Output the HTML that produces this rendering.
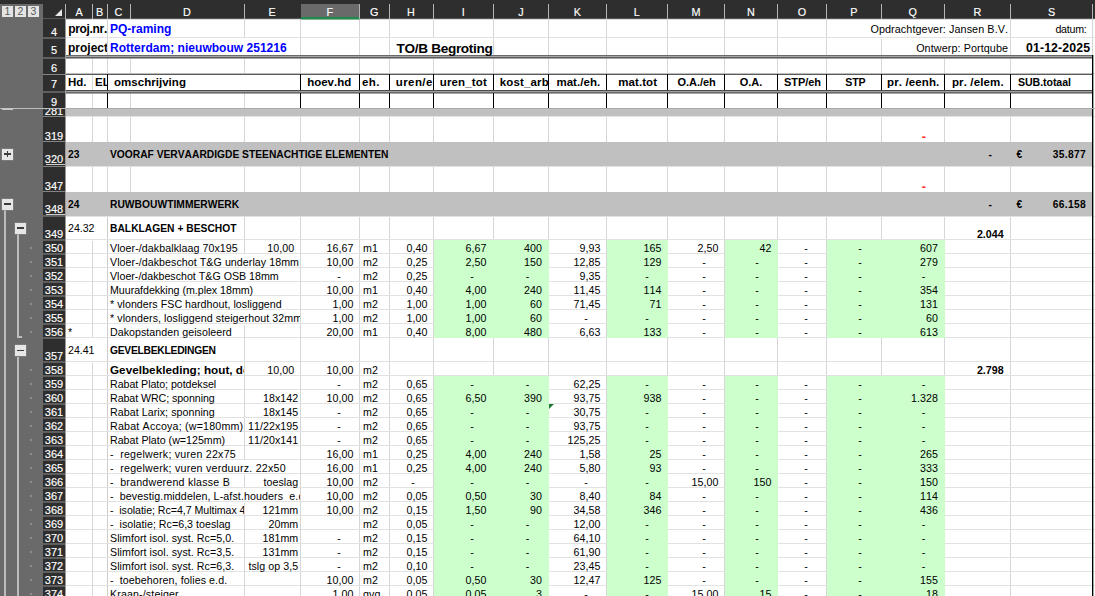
<!DOCTYPE html>
<html><head><meta charset="utf-8"><title>Begroting</title>
<style>
html,body{margin:0;padding:0;}
body{width:1095px;height:596px;overflow:hidden;background:#fff;position:relative;}
#s{position:absolute;left:0;top:0;width:1095px;height:596px;overflow:hidden;background:#fff;font-family:"Liberation Sans", sans-serif;font-size:10.67px;line-height:normal;font-kerning:none;white-space:pre;}
#s div,#s svg,#s span{position:absolute;}
</style></head><body><div id="s">
<div style="left:92px;top:18px;width:1px;height:21px;background:#d6d6d6;"></div>
<div style="left:107px;top:18px;width:1px;height:21px;background:#d6d6d6;"></div>
<div style="left:130px;top:18px;width:1px;height:21px;background:#d6d6d6;"></div>
<div style="left:244px;top:18px;width:1px;height:21px;background:#d6d6d6;"></div>
<div style="left:300px;top:18px;width:1px;height:21px;background:#d6d6d6;"></div>
<div style="left:359px;top:18px;width:1px;height:21px;background:#d6d6d6;"></div>
<div style="left:389px;top:18px;width:1px;height:21px;background:#d6d6d6;"></div>
<div style="left:433px;top:18px;width:1px;height:21px;background:#d6d6d6;"></div>
<div style="left:493px;top:18px;width:1px;height:21px;background:#d6d6d6;"></div>
<div style="left:548px;top:18px;width:1px;height:21px;background:#d6d6d6;"></div>
<div style="left:606px;top:18px;width:1px;height:21px;background:#d6d6d6;"></div>
<div style="left:667px;top:18px;width:1px;height:21px;background:#d6d6d6;"></div>
<div style="left:724px;top:18px;width:1px;height:21px;background:#d6d6d6;"></div>
<div style="left:777px;top:18px;width:1px;height:21px;background:#d6d6d6;"></div>
<div style="left:826px;top:18px;width:1px;height:21px;background:#d6d6d6;"></div>
<div style="left:881px;top:18px;width:1px;height:21px;background:#d6d6d6;"></div>
<div style="left:944px;top:18px;width:1px;height:21px;background:#d6d6d6;"></div>
<div style="left:1010px;top:18px;width:1px;height:21px;background:#d6d6d6;"></div>
<div style="left:1092px;top:18px;width:1px;height:21px;background:#d6d6d6;"></div>
<div style="left:92px;top:37px;width:1px;height:20px;background:#d6d6d6;"></div>
<div style="left:107px;top:37px;width:1px;height:20px;background:#d6d6d6;"></div>
<div style="left:130px;top:37px;width:1px;height:20px;background:#d6d6d6;"></div>
<div style="left:244px;top:37px;width:1px;height:20px;background:#d6d6d6;"></div>
<div style="left:300px;top:37px;width:1px;height:20px;background:#d6d6d6;"></div>
<div style="left:359px;top:37px;width:1px;height:20px;background:#d6d6d6;"></div>
<div style="left:389px;top:37px;width:1px;height:20px;background:#d6d6d6;"></div>
<div style="left:433px;top:37px;width:1px;height:20px;background:#d6d6d6;"></div>
<div style="left:493px;top:37px;width:1px;height:20px;background:#d6d6d6;"></div>
<div style="left:548px;top:37px;width:1px;height:20px;background:#d6d6d6;"></div>
<div style="left:606px;top:37px;width:1px;height:20px;background:#d6d6d6;"></div>
<div style="left:667px;top:37px;width:1px;height:20px;background:#d6d6d6;"></div>
<div style="left:724px;top:37px;width:1px;height:20px;background:#d6d6d6;"></div>
<div style="left:777px;top:37px;width:1px;height:20px;background:#d6d6d6;"></div>
<div style="left:826px;top:37px;width:1px;height:20px;background:#d6d6d6;"></div>
<div style="left:881px;top:37px;width:1px;height:20px;background:#d6d6d6;"></div>
<div style="left:944px;top:37px;width:1px;height:20px;background:#d6d6d6;"></div>
<div style="left:1010px;top:37px;width:1px;height:20px;background:#d6d6d6;"></div>
<div style="left:1092px;top:37px;width:1px;height:20px;background:#d6d6d6;"></div>
<div style="left:92px;top:58px;width:1px;height:17px;background:#d6d6d6;"></div>
<div style="left:107px;top:58px;width:1px;height:17px;background:#d6d6d6;"></div>
<div style="left:130px;top:58px;width:1px;height:17px;background:#d6d6d6;"></div>
<div style="left:244px;top:58px;width:1px;height:17px;background:#d6d6d6;"></div>
<div style="left:300px;top:58px;width:1px;height:17px;background:#d6d6d6;"></div>
<div style="left:359px;top:58px;width:1px;height:17px;background:#d6d6d6;"></div>
<div style="left:389px;top:58px;width:1px;height:17px;background:#d6d6d6;"></div>
<div style="left:433px;top:58px;width:1px;height:17px;background:#d6d6d6;"></div>
<div style="left:493px;top:58px;width:1px;height:17px;background:#d6d6d6;"></div>
<div style="left:548px;top:58px;width:1px;height:17px;background:#d6d6d6;"></div>
<div style="left:606px;top:58px;width:1px;height:17px;background:#d6d6d6;"></div>
<div style="left:667px;top:58px;width:1px;height:17px;background:#d6d6d6;"></div>
<div style="left:724px;top:58px;width:1px;height:17px;background:#d6d6d6;"></div>
<div style="left:777px;top:58px;width:1px;height:17px;background:#d6d6d6;"></div>
<div style="left:826px;top:58px;width:1px;height:17px;background:#d6d6d6;"></div>
<div style="left:881px;top:58px;width:1px;height:17px;background:#d6d6d6;"></div>
<div style="left:944px;top:58px;width:1px;height:17px;background:#d6d6d6;"></div>
<div style="left:1010px;top:58px;width:1px;height:17px;background:#d6d6d6;"></div>
<div style="left:1092px;top:58px;width:1px;height:17px;background:#d6d6d6;"></div>
<div style="left:92px;top:74px;width:1px;height:17px;background:#d6d6d6;"></div>
<div style="left:107px;top:74px;width:1px;height:17px;background:#d6d6d6;"></div>
<div style="left:130px;top:74px;width:1px;height:17px;background:#d6d6d6;"></div>
<div style="left:244px;top:74px;width:1px;height:17px;background:#d6d6d6;"></div>
<div style="left:300px;top:74px;width:1px;height:17px;background:#d6d6d6;"></div>
<div style="left:359px;top:74px;width:1px;height:17px;background:#d6d6d6;"></div>
<div style="left:389px;top:74px;width:1px;height:17px;background:#d6d6d6;"></div>
<div style="left:433px;top:74px;width:1px;height:17px;background:#d6d6d6;"></div>
<div style="left:493px;top:74px;width:1px;height:17px;background:#d6d6d6;"></div>
<div style="left:548px;top:74px;width:1px;height:17px;background:#d6d6d6;"></div>
<div style="left:606px;top:74px;width:1px;height:17px;background:#d6d6d6;"></div>
<div style="left:667px;top:74px;width:1px;height:17px;background:#d6d6d6;"></div>
<div style="left:724px;top:74px;width:1px;height:17px;background:#d6d6d6;"></div>
<div style="left:777px;top:74px;width:1px;height:17px;background:#d6d6d6;"></div>
<div style="left:826px;top:74px;width:1px;height:17px;background:#d6d6d6;"></div>
<div style="left:881px;top:74px;width:1px;height:17px;background:#d6d6d6;"></div>
<div style="left:944px;top:74px;width:1px;height:17px;background:#d6d6d6;"></div>
<div style="left:1010px;top:74px;width:1px;height:17px;background:#d6d6d6;"></div>
<div style="left:1092px;top:74px;width:1px;height:17px;background:#d6d6d6;"></div>
<div style="left:92px;top:92px;width:1px;height:17px;background:#d6d6d6;"></div>
<div style="left:107px;top:92px;width:1px;height:17px;background:#d6d6d6;"></div>
<div style="left:130px;top:92px;width:1px;height:17px;background:#d6d6d6;"></div>
<div style="left:244px;top:92px;width:1px;height:17px;background:#d6d6d6;"></div>
<div style="left:300px;top:92px;width:1px;height:17px;background:#d6d6d6;"></div>
<div style="left:359px;top:92px;width:1px;height:17px;background:#d6d6d6;"></div>
<div style="left:389px;top:92px;width:1px;height:17px;background:#d6d6d6;"></div>
<div style="left:433px;top:92px;width:1px;height:17px;background:#d6d6d6;"></div>
<div style="left:493px;top:92px;width:1px;height:17px;background:#d6d6d6;"></div>
<div style="left:548px;top:92px;width:1px;height:17px;background:#d6d6d6;"></div>
<div style="left:606px;top:92px;width:1px;height:17px;background:#d6d6d6;"></div>
<div style="left:667px;top:92px;width:1px;height:17px;background:#d6d6d6;"></div>
<div style="left:724px;top:92px;width:1px;height:17px;background:#d6d6d6;"></div>
<div style="left:777px;top:92px;width:1px;height:17px;background:#d6d6d6;"></div>
<div style="left:826px;top:92px;width:1px;height:17px;background:#d6d6d6;"></div>
<div style="left:881px;top:92px;width:1px;height:17px;background:#d6d6d6;"></div>
<div style="left:944px;top:92px;width:1px;height:17px;background:#d6d6d6;"></div>
<div style="left:1010px;top:92px;width:1px;height:17px;background:#d6d6d6;"></div>
<div style="left:1092px;top:92px;width:1px;height:17px;background:#d6d6d6;"></div>
<div style="left:92px;top:115px;width:1px;height:28px;background:#d6d6d6;"></div>
<div style="left:107px;top:115px;width:1px;height:28px;background:#d6d6d6;"></div>
<div style="left:130px;top:115px;width:1px;height:28px;background:#d6d6d6;"></div>
<div style="left:244px;top:115px;width:1px;height:28px;background:#d6d6d6;"></div>
<div style="left:300px;top:115px;width:1px;height:28px;background:#d6d6d6;"></div>
<div style="left:359px;top:115px;width:1px;height:28px;background:#d6d6d6;"></div>
<div style="left:389px;top:115px;width:1px;height:28px;background:#d6d6d6;"></div>
<div style="left:433px;top:115px;width:1px;height:28px;background:#d6d6d6;"></div>
<div style="left:493px;top:115px;width:1px;height:28px;background:#d6d6d6;"></div>
<div style="left:548px;top:115px;width:1px;height:28px;background:#d6d6d6;"></div>
<div style="left:606px;top:115px;width:1px;height:28px;background:#d6d6d6;"></div>
<div style="left:667px;top:115px;width:1px;height:28px;background:#d6d6d6;"></div>
<div style="left:724px;top:115px;width:1px;height:28px;background:#d6d6d6;"></div>
<div style="left:777px;top:115px;width:1px;height:28px;background:#d6d6d6;"></div>
<div style="left:826px;top:115px;width:1px;height:28px;background:#d6d6d6;"></div>
<div style="left:881px;top:115px;width:1px;height:28px;background:#d6d6d6;"></div>
<div style="left:944px;top:115px;width:1px;height:28px;background:#d6d6d6;"></div>
<div style="left:1010px;top:115px;width:1px;height:28px;background:#d6d6d6;"></div>
<div style="left:1092px;top:115px;width:1px;height:28px;background:#d6d6d6;"></div>
<div style="left:92px;top:165px;width:1px;height:28px;background:#d6d6d6;"></div>
<div style="left:107px;top:165px;width:1px;height:28px;background:#d6d6d6;"></div>
<div style="left:130px;top:165px;width:1px;height:28px;background:#d6d6d6;"></div>
<div style="left:244px;top:165px;width:1px;height:28px;background:#d6d6d6;"></div>
<div style="left:300px;top:165px;width:1px;height:28px;background:#d6d6d6;"></div>
<div style="left:359px;top:165px;width:1px;height:28px;background:#d6d6d6;"></div>
<div style="left:389px;top:165px;width:1px;height:28px;background:#d6d6d6;"></div>
<div style="left:433px;top:165px;width:1px;height:28px;background:#d6d6d6;"></div>
<div style="left:493px;top:165px;width:1px;height:28px;background:#d6d6d6;"></div>
<div style="left:548px;top:165px;width:1px;height:28px;background:#d6d6d6;"></div>
<div style="left:606px;top:165px;width:1px;height:28px;background:#d6d6d6;"></div>
<div style="left:667px;top:165px;width:1px;height:28px;background:#d6d6d6;"></div>
<div style="left:724px;top:165px;width:1px;height:28px;background:#d6d6d6;"></div>
<div style="left:777px;top:165px;width:1px;height:28px;background:#d6d6d6;"></div>
<div style="left:826px;top:165px;width:1px;height:28px;background:#d6d6d6;"></div>
<div style="left:881px;top:165px;width:1px;height:28px;background:#d6d6d6;"></div>
<div style="left:944px;top:165px;width:1px;height:28px;background:#d6d6d6;"></div>
<div style="left:1010px;top:165px;width:1px;height:28px;background:#d6d6d6;"></div>
<div style="left:1092px;top:165px;width:1px;height:28px;background:#d6d6d6;"></div>
<div style="left:92px;top:215px;width:1px;height:26px;background:#d6d6d6;"></div>
<div style="left:107px;top:215px;width:1px;height:26px;background:#cdcdcd;"></div>
<div style="left:130px;top:215px;width:1px;height:26px;background:#d6d6d6;"></div>
<div style="left:244px;top:215px;width:1px;height:26px;background:#d6d6d6;"></div>
<div style="left:300px;top:215px;width:1px;height:26px;background:#d6d6d6;"></div>
<div style="left:359px;top:215px;width:1px;height:26px;background:#d6d6d6;"></div>
<div style="left:389px;top:215px;width:1px;height:26px;background:#d6d6d6;"></div>
<div style="left:433px;top:215px;width:1px;height:26px;background:#d6d6d6;"></div>
<div style="left:493px;top:215px;width:1px;height:26px;background:#d6d6d6;"></div>
<div style="left:548px;top:215px;width:1px;height:26px;background:#d6d6d6;"></div>
<div style="left:606px;top:215px;width:1px;height:26px;background:#d6d6d6;"></div>
<div style="left:667px;top:215px;width:1px;height:26px;background:#d6d6d6;"></div>
<div style="left:724px;top:215px;width:1px;height:26px;background:#d6d6d6;"></div>
<div style="left:777px;top:215px;width:1px;height:26px;background:#d6d6d6;"></div>
<div style="left:826px;top:215px;width:1px;height:26px;background:#d6d6d6;"></div>
<div style="left:881px;top:215px;width:1px;height:26px;background:#d6d6d6;"></div>
<div style="left:944px;top:215px;width:1px;height:26px;background:#d6d6d6;"></div>
<div style="left:1010px;top:215px;width:1px;height:26px;background:#d6d6d6;"></div>
<div style="left:1092px;top:215px;width:1px;height:26px;background:#d6d6d6;"></div>
<div style="left:92px;top:239px;width:1px;height:16px;background:#d6d6d6;"></div>
<div style="left:107px;top:239px;width:1px;height:16px;background:#cdcdcd;"></div>
<div style="left:130px;top:239px;width:1px;height:16px;background:#d6d6d6;"></div>
<div style="left:244px;top:239px;width:1px;height:16px;background:#d6d6d6;"></div>
<div style="left:300px;top:239px;width:1px;height:16px;background:#d6d6d6;"></div>
<div style="left:359px;top:239px;width:1px;height:16px;background:#d6d6d6;"></div>
<div style="left:389px;top:239px;width:1px;height:16px;background:#d6d6d6;"></div>
<div style="left:433px;top:239px;width:1px;height:16px;background:#d6d6d6;"></div>
<div style="left:493px;top:239px;width:1px;height:16px;background:#d6d6d6;"></div>
<div style="left:548px;top:239px;width:1px;height:16px;background:#d6d6d6;"></div>
<div style="left:606px;top:239px;width:1px;height:16px;background:#d6d6d6;"></div>
<div style="left:667px;top:239px;width:1px;height:16px;background:#d6d6d6;"></div>
<div style="left:724px;top:239px;width:1px;height:16px;background:#d6d6d6;"></div>
<div style="left:777px;top:239px;width:1px;height:16px;background:#d6d6d6;"></div>
<div style="left:826px;top:239px;width:1px;height:16px;background:#d6d6d6;"></div>
<div style="left:881px;top:239px;width:1px;height:16px;background:#d6d6d6;"></div>
<div style="left:944px;top:239px;width:1px;height:16px;background:#d6d6d6;"></div>
<div style="left:1010px;top:239px;width:1px;height:16px;background:#d6d6d6;"></div>
<div style="left:1092px;top:239px;width:1px;height:16px;background:#d6d6d6;"></div>
<div style="left:92px;top:253px;width:1px;height:16px;background:#d6d6d6;"></div>
<div style="left:107px;top:253px;width:1px;height:16px;background:#cdcdcd;"></div>
<div style="left:130px;top:253px;width:1px;height:16px;background:#d6d6d6;"></div>
<div style="left:244px;top:253px;width:1px;height:16px;background:#d6d6d6;"></div>
<div style="left:300px;top:253px;width:1px;height:16px;background:#d6d6d6;"></div>
<div style="left:359px;top:253px;width:1px;height:16px;background:#d6d6d6;"></div>
<div style="left:389px;top:253px;width:1px;height:16px;background:#d6d6d6;"></div>
<div style="left:433px;top:253px;width:1px;height:16px;background:#d6d6d6;"></div>
<div style="left:493px;top:253px;width:1px;height:16px;background:#d6d6d6;"></div>
<div style="left:548px;top:253px;width:1px;height:16px;background:#d6d6d6;"></div>
<div style="left:606px;top:253px;width:1px;height:16px;background:#d6d6d6;"></div>
<div style="left:667px;top:253px;width:1px;height:16px;background:#d6d6d6;"></div>
<div style="left:724px;top:253px;width:1px;height:16px;background:#d6d6d6;"></div>
<div style="left:777px;top:253px;width:1px;height:16px;background:#d6d6d6;"></div>
<div style="left:826px;top:253px;width:1px;height:16px;background:#d6d6d6;"></div>
<div style="left:881px;top:253px;width:1px;height:16px;background:#d6d6d6;"></div>
<div style="left:944px;top:253px;width:1px;height:16px;background:#d6d6d6;"></div>
<div style="left:1010px;top:253px;width:1px;height:16px;background:#d6d6d6;"></div>
<div style="left:1092px;top:253px;width:1px;height:16px;background:#d6d6d6;"></div>
<div style="left:92px;top:267px;width:1px;height:16px;background:#d6d6d6;"></div>
<div style="left:107px;top:267px;width:1px;height:16px;background:#cdcdcd;"></div>
<div style="left:130px;top:267px;width:1px;height:16px;background:#d6d6d6;"></div>
<div style="left:244px;top:267px;width:1px;height:16px;background:#d6d6d6;"></div>
<div style="left:300px;top:267px;width:1px;height:16px;background:#d6d6d6;"></div>
<div style="left:359px;top:267px;width:1px;height:16px;background:#d6d6d6;"></div>
<div style="left:389px;top:267px;width:1px;height:16px;background:#d6d6d6;"></div>
<div style="left:433px;top:267px;width:1px;height:16px;background:#d6d6d6;"></div>
<div style="left:493px;top:267px;width:1px;height:16px;background:#d6d6d6;"></div>
<div style="left:548px;top:267px;width:1px;height:16px;background:#d6d6d6;"></div>
<div style="left:606px;top:267px;width:1px;height:16px;background:#d6d6d6;"></div>
<div style="left:667px;top:267px;width:1px;height:16px;background:#d6d6d6;"></div>
<div style="left:724px;top:267px;width:1px;height:16px;background:#d6d6d6;"></div>
<div style="left:777px;top:267px;width:1px;height:16px;background:#d6d6d6;"></div>
<div style="left:826px;top:267px;width:1px;height:16px;background:#d6d6d6;"></div>
<div style="left:881px;top:267px;width:1px;height:16px;background:#d6d6d6;"></div>
<div style="left:944px;top:267px;width:1px;height:16px;background:#d6d6d6;"></div>
<div style="left:1010px;top:267px;width:1px;height:16px;background:#d6d6d6;"></div>
<div style="left:1092px;top:267px;width:1px;height:16px;background:#d6d6d6;"></div>
<div style="left:92px;top:281px;width:1px;height:16px;background:#d6d6d6;"></div>
<div style="left:107px;top:281px;width:1px;height:16px;background:#cdcdcd;"></div>
<div style="left:130px;top:281px;width:1px;height:16px;background:#d6d6d6;"></div>
<div style="left:244px;top:281px;width:1px;height:16px;background:#d6d6d6;"></div>
<div style="left:300px;top:281px;width:1px;height:16px;background:#d6d6d6;"></div>
<div style="left:359px;top:281px;width:1px;height:16px;background:#d6d6d6;"></div>
<div style="left:389px;top:281px;width:1px;height:16px;background:#d6d6d6;"></div>
<div style="left:433px;top:281px;width:1px;height:16px;background:#d6d6d6;"></div>
<div style="left:493px;top:281px;width:1px;height:16px;background:#d6d6d6;"></div>
<div style="left:548px;top:281px;width:1px;height:16px;background:#d6d6d6;"></div>
<div style="left:606px;top:281px;width:1px;height:16px;background:#d6d6d6;"></div>
<div style="left:667px;top:281px;width:1px;height:16px;background:#d6d6d6;"></div>
<div style="left:724px;top:281px;width:1px;height:16px;background:#d6d6d6;"></div>
<div style="left:777px;top:281px;width:1px;height:16px;background:#d6d6d6;"></div>
<div style="left:826px;top:281px;width:1px;height:16px;background:#d6d6d6;"></div>
<div style="left:881px;top:281px;width:1px;height:16px;background:#d6d6d6;"></div>
<div style="left:944px;top:281px;width:1px;height:16px;background:#d6d6d6;"></div>
<div style="left:1010px;top:281px;width:1px;height:16px;background:#d6d6d6;"></div>
<div style="left:1092px;top:281px;width:1px;height:16px;background:#d6d6d6;"></div>
<div style="left:92px;top:295px;width:1px;height:16px;background:#d6d6d6;"></div>
<div style="left:107px;top:295px;width:1px;height:16px;background:#cdcdcd;"></div>
<div style="left:130px;top:295px;width:1px;height:16px;background:#d6d6d6;"></div>
<div style="left:244px;top:295px;width:1px;height:16px;background:#d6d6d6;"></div>
<div style="left:300px;top:295px;width:1px;height:16px;background:#d6d6d6;"></div>
<div style="left:359px;top:295px;width:1px;height:16px;background:#d6d6d6;"></div>
<div style="left:389px;top:295px;width:1px;height:16px;background:#d6d6d6;"></div>
<div style="left:433px;top:295px;width:1px;height:16px;background:#d6d6d6;"></div>
<div style="left:493px;top:295px;width:1px;height:16px;background:#d6d6d6;"></div>
<div style="left:548px;top:295px;width:1px;height:16px;background:#d6d6d6;"></div>
<div style="left:606px;top:295px;width:1px;height:16px;background:#d6d6d6;"></div>
<div style="left:667px;top:295px;width:1px;height:16px;background:#d6d6d6;"></div>
<div style="left:724px;top:295px;width:1px;height:16px;background:#d6d6d6;"></div>
<div style="left:777px;top:295px;width:1px;height:16px;background:#d6d6d6;"></div>
<div style="left:826px;top:295px;width:1px;height:16px;background:#d6d6d6;"></div>
<div style="left:881px;top:295px;width:1px;height:16px;background:#d6d6d6;"></div>
<div style="left:944px;top:295px;width:1px;height:16px;background:#d6d6d6;"></div>
<div style="left:1010px;top:295px;width:1px;height:16px;background:#d6d6d6;"></div>
<div style="left:1092px;top:295px;width:1px;height:16px;background:#d6d6d6;"></div>
<div style="left:92px;top:309px;width:1px;height:16px;background:#d6d6d6;"></div>
<div style="left:107px;top:309px;width:1px;height:16px;background:#cdcdcd;"></div>
<div style="left:130px;top:309px;width:1px;height:16px;background:#d6d6d6;"></div>
<div style="left:244px;top:309px;width:1px;height:16px;background:#d6d6d6;"></div>
<div style="left:300px;top:309px;width:1px;height:16px;background:#d6d6d6;"></div>
<div style="left:359px;top:309px;width:1px;height:16px;background:#d6d6d6;"></div>
<div style="left:389px;top:309px;width:1px;height:16px;background:#d6d6d6;"></div>
<div style="left:433px;top:309px;width:1px;height:16px;background:#d6d6d6;"></div>
<div style="left:493px;top:309px;width:1px;height:16px;background:#d6d6d6;"></div>
<div style="left:548px;top:309px;width:1px;height:16px;background:#d6d6d6;"></div>
<div style="left:606px;top:309px;width:1px;height:16px;background:#d6d6d6;"></div>
<div style="left:667px;top:309px;width:1px;height:16px;background:#d6d6d6;"></div>
<div style="left:724px;top:309px;width:1px;height:16px;background:#d6d6d6;"></div>
<div style="left:777px;top:309px;width:1px;height:16px;background:#d6d6d6;"></div>
<div style="left:826px;top:309px;width:1px;height:16px;background:#d6d6d6;"></div>
<div style="left:881px;top:309px;width:1px;height:16px;background:#d6d6d6;"></div>
<div style="left:944px;top:309px;width:1px;height:16px;background:#d6d6d6;"></div>
<div style="left:1010px;top:309px;width:1px;height:16px;background:#d6d6d6;"></div>
<div style="left:1092px;top:309px;width:1px;height:16px;background:#d6d6d6;"></div>
<div style="left:92px;top:323px;width:1px;height:16px;background:#d6d6d6;"></div>
<div style="left:107px;top:323px;width:1px;height:16px;background:#cdcdcd;"></div>
<div style="left:130px;top:323px;width:1px;height:16px;background:#d6d6d6;"></div>
<div style="left:244px;top:323px;width:1px;height:16px;background:#d6d6d6;"></div>
<div style="left:300px;top:323px;width:1px;height:16px;background:#d6d6d6;"></div>
<div style="left:359px;top:323px;width:1px;height:16px;background:#d6d6d6;"></div>
<div style="left:389px;top:323px;width:1px;height:16px;background:#d6d6d6;"></div>
<div style="left:433px;top:323px;width:1px;height:16px;background:#d6d6d6;"></div>
<div style="left:493px;top:323px;width:1px;height:16px;background:#d6d6d6;"></div>
<div style="left:548px;top:323px;width:1px;height:16px;background:#d6d6d6;"></div>
<div style="left:606px;top:323px;width:1px;height:16px;background:#d6d6d6;"></div>
<div style="left:667px;top:323px;width:1px;height:16px;background:#d6d6d6;"></div>
<div style="left:724px;top:323px;width:1px;height:16px;background:#d6d6d6;"></div>
<div style="left:777px;top:323px;width:1px;height:16px;background:#d6d6d6;"></div>
<div style="left:826px;top:323px;width:1px;height:16px;background:#d6d6d6;"></div>
<div style="left:881px;top:323px;width:1px;height:16px;background:#d6d6d6;"></div>
<div style="left:944px;top:323px;width:1px;height:16px;background:#d6d6d6;"></div>
<div style="left:1010px;top:323px;width:1px;height:16px;background:#d6d6d6;"></div>
<div style="left:1092px;top:323px;width:1px;height:16px;background:#d6d6d6;"></div>
<div style="left:92px;top:337px;width:1px;height:26px;background:#d6d6d6;"></div>
<div style="left:107px;top:337px;width:1px;height:26px;background:#cdcdcd;"></div>
<div style="left:130px;top:337px;width:1px;height:26px;background:#d6d6d6;"></div>
<div style="left:244px;top:337px;width:1px;height:26px;background:#d6d6d6;"></div>
<div style="left:300px;top:337px;width:1px;height:26px;background:#d6d6d6;"></div>
<div style="left:359px;top:337px;width:1px;height:26px;background:#d6d6d6;"></div>
<div style="left:389px;top:337px;width:1px;height:26px;background:#d6d6d6;"></div>
<div style="left:433px;top:337px;width:1px;height:26px;background:#d6d6d6;"></div>
<div style="left:493px;top:337px;width:1px;height:26px;background:#d6d6d6;"></div>
<div style="left:548px;top:337px;width:1px;height:26px;background:#d6d6d6;"></div>
<div style="left:606px;top:337px;width:1px;height:26px;background:#d6d6d6;"></div>
<div style="left:667px;top:337px;width:1px;height:26px;background:#d6d6d6;"></div>
<div style="left:724px;top:337px;width:1px;height:26px;background:#d6d6d6;"></div>
<div style="left:777px;top:337px;width:1px;height:26px;background:#d6d6d6;"></div>
<div style="left:826px;top:337px;width:1px;height:26px;background:#d6d6d6;"></div>
<div style="left:881px;top:337px;width:1px;height:26px;background:#d6d6d6;"></div>
<div style="left:944px;top:337px;width:1px;height:26px;background:#d6d6d6;"></div>
<div style="left:1010px;top:337px;width:1px;height:26px;background:#d6d6d6;"></div>
<div style="left:1092px;top:337px;width:1px;height:26px;background:#d6d6d6;"></div>
<div style="left:92px;top:361px;width:1px;height:16px;background:#d6d6d6;"></div>
<div style="left:107px;top:361px;width:1px;height:16px;background:#cdcdcd;"></div>
<div style="left:130px;top:361px;width:1px;height:16px;background:#d6d6d6;"></div>
<div style="left:244px;top:361px;width:1px;height:16px;background:#d6d6d6;"></div>
<div style="left:300px;top:361px;width:1px;height:16px;background:#d6d6d6;"></div>
<div style="left:359px;top:361px;width:1px;height:16px;background:#d6d6d6;"></div>
<div style="left:389px;top:361px;width:1px;height:16px;background:#d6d6d6;"></div>
<div style="left:433px;top:361px;width:1px;height:16px;background:#d6d6d6;"></div>
<div style="left:493px;top:361px;width:1px;height:16px;background:#d6d6d6;"></div>
<div style="left:548px;top:361px;width:1px;height:16px;background:#d6d6d6;"></div>
<div style="left:606px;top:361px;width:1px;height:16px;background:#d6d6d6;"></div>
<div style="left:667px;top:361px;width:1px;height:16px;background:#d6d6d6;"></div>
<div style="left:724px;top:361px;width:1px;height:16px;background:#d6d6d6;"></div>
<div style="left:777px;top:361px;width:1px;height:16px;background:#d6d6d6;"></div>
<div style="left:826px;top:361px;width:1px;height:16px;background:#d6d6d6;"></div>
<div style="left:881px;top:361px;width:1px;height:16px;background:#d6d6d6;"></div>
<div style="left:944px;top:361px;width:1px;height:16px;background:#d6d6d6;"></div>
<div style="left:1010px;top:361px;width:1px;height:16px;background:#d6d6d6;"></div>
<div style="left:1092px;top:361px;width:1px;height:16px;background:#d6d6d6;"></div>
<div style="left:92px;top:375px;width:1px;height:16px;background:#d6d6d6;"></div>
<div style="left:107px;top:375px;width:1px;height:16px;background:#cdcdcd;"></div>
<div style="left:130px;top:375px;width:1px;height:16px;background:#d6d6d6;"></div>
<div style="left:244px;top:375px;width:1px;height:16px;background:#d6d6d6;"></div>
<div style="left:300px;top:375px;width:1px;height:16px;background:#d6d6d6;"></div>
<div style="left:359px;top:375px;width:1px;height:16px;background:#d6d6d6;"></div>
<div style="left:389px;top:375px;width:1px;height:16px;background:#d6d6d6;"></div>
<div style="left:433px;top:375px;width:1px;height:16px;background:#d6d6d6;"></div>
<div style="left:493px;top:375px;width:1px;height:16px;background:#d6d6d6;"></div>
<div style="left:548px;top:375px;width:1px;height:16px;background:#d6d6d6;"></div>
<div style="left:606px;top:375px;width:1px;height:16px;background:#d6d6d6;"></div>
<div style="left:667px;top:375px;width:1px;height:16px;background:#d6d6d6;"></div>
<div style="left:724px;top:375px;width:1px;height:16px;background:#d6d6d6;"></div>
<div style="left:777px;top:375px;width:1px;height:16px;background:#d6d6d6;"></div>
<div style="left:826px;top:375px;width:1px;height:16px;background:#d6d6d6;"></div>
<div style="left:881px;top:375px;width:1px;height:16px;background:#d6d6d6;"></div>
<div style="left:944px;top:375px;width:1px;height:16px;background:#d6d6d6;"></div>
<div style="left:1010px;top:375px;width:1px;height:16px;background:#d6d6d6;"></div>
<div style="left:1092px;top:375px;width:1px;height:16px;background:#d6d6d6;"></div>
<div style="left:92px;top:389px;width:1px;height:16px;background:#d6d6d6;"></div>
<div style="left:107px;top:389px;width:1px;height:16px;background:#cdcdcd;"></div>
<div style="left:130px;top:389px;width:1px;height:16px;background:#d6d6d6;"></div>
<div style="left:244px;top:389px;width:1px;height:16px;background:#d6d6d6;"></div>
<div style="left:300px;top:389px;width:1px;height:16px;background:#d6d6d6;"></div>
<div style="left:359px;top:389px;width:1px;height:16px;background:#d6d6d6;"></div>
<div style="left:389px;top:389px;width:1px;height:16px;background:#d6d6d6;"></div>
<div style="left:433px;top:389px;width:1px;height:16px;background:#d6d6d6;"></div>
<div style="left:493px;top:389px;width:1px;height:16px;background:#d6d6d6;"></div>
<div style="left:548px;top:389px;width:1px;height:16px;background:#d6d6d6;"></div>
<div style="left:606px;top:389px;width:1px;height:16px;background:#d6d6d6;"></div>
<div style="left:667px;top:389px;width:1px;height:16px;background:#d6d6d6;"></div>
<div style="left:724px;top:389px;width:1px;height:16px;background:#d6d6d6;"></div>
<div style="left:777px;top:389px;width:1px;height:16px;background:#d6d6d6;"></div>
<div style="left:826px;top:389px;width:1px;height:16px;background:#d6d6d6;"></div>
<div style="left:881px;top:389px;width:1px;height:16px;background:#d6d6d6;"></div>
<div style="left:944px;top:389px;width:1px;height:16px;background:#d6d6d6;"></div>
<div style="left:1010px;top:389px;width:1px;height:16px;background:#d6d6d6;"></div>
<div style="left:1092px;top:389px;width:1px;height:16px;background:#d6d6d6;"></div>
<div style="left:92px;top:403px;width:1px;height:16px;background:#d6d6d6;"></div>
<div style="left:107px;top:403px;width:1px;height:16px;background:#cdcdcd;"></div>
<div style="left:130px;top:403px;width:1px;height:16px;background:#d6d6d6;"></div>
<div style="left:244px;top:403px;width:1px;height:16px;background:#d6d6d6;"></div>
<div style="left:300px;top:403px;width:1px;height:16px;background:#d6d6d6;"></div>
<div style="left:359px;top:403px;width:1px;height:16px;background:#d6d6d6;"></div>
<div style="left:389px;top:403px;width:1px;height:16px;background:#d6d6d6;"></div>
<div style="left:433px;top:403px;width:1px;height:16px;background:#d6d6d6;"></div>
<div style="left:493px;top:403px;width:1px;height:16px;background:#d6d6d6;"></div>
<div style="left:548px;top:403px;width:1px;height:16px;background:#d6d6d6;"></div>
<div style="left:606px;top:403px;width:1px;height:16px;background:#d6d6d6;"></div>
<div style="left:667px;top:403px;width:1px;height:16px;background:#d6d6d6;"></div>
<div style="left:724px;top:403px;width:1px;height:16px;background:#d6d6d6;"></div>
<div style="left:777px;top:403px;width:1px;height:16px;background:#d6d6d6;"></div>
<div style="left:826px;top:403px;width:1px;height:16px;background:#d6d6d6;"></div>
<div style="left:881px;top:403px;width:1px;height:16px;background:#d6d6d6;"></div>
<div style="left:944px;top:403px;width:1px;height:16px;background:#d6d6d6;"></div>
<div style="left:1010px;top:403px;width:1px;height:16px;background:#d6d6d6;"></div>
<div style="left:1092px;top:403px;width:1px;height:16px;background:#d6d6d6;"></div>
<div style="left:92px;top:417px;width:1px;height:16px;background:#d6d6d6;"></div>
<div style="left:107px;top:417px;width:1px;height:16px;background:#cdcdcd;"></div>
<div style="left:130px;top:417px;width:1px;height:16px;background:#d6d6d6;"></div>
<div style="left:244px;top:417px;width:1px;height:16px;background:#d6d6d6;"></div>
<div style="left:300px;top:417px;width:1px;height:16px;background:#d6d6d6;"></div>
<div style="left:359px;top:417px;width:1px;height:16px;background:#d6d6d6;"></div>
<div style="left:389px;top:417px;width:1px;height:16px;background:#d6d6d6;"></div>
<div style="left:433px;top:417px;width:1px;height:16px;background:#d6d6d6;"></div>
<div style="left:493px;top:417px;width:1px;height:16px;background:#d6d6d6;"></div>
<div style="left:548px;top:417px;width:1px;height:16px;background:#d6d6d6;"></div>
<div style="left:606px;top:417px;width:1px;height:16px;background:#d6d6d6;"></div>
<div style="left:667px;top:417px;width:1px;height:16px;background:#d6d6d6;"></div>
<div style="left:724px;top:417px;width:1px;height:16px;background:#d6d6d6;"></div>
<div style="left:777px;top:417px;width:1px;height:16px;background:#d6d6d6;"></div>
<div style="left:826px;top:417px;width:1px;height:16px;background:#d6d6d6;"></div>
<div style="left:881px;top:417px;width:1px;height:16px;background:#d6d6d6;"></div>
<div style="left:944px;top:417px;width:1px;height:16px;background:#d6d6d6;"></div>
<div style="left:1010px;top:417px;width:1px;height:16px;background:#d6d6d6;"></div>
<div style="left:1092px;top:417px;width:1px;height:16px;background:#d6d6d6;"></div>
<div style="left:92px;top:431px;width:1px;height:16px;background:#d6d6d6;"></div>
<div style="left:107px;top:431px;width:1px;height:16px;background:#cdcdcd;"></div>
<div style="left:130px;top:431px;width:1px;height:16px;background:#d6d6d6;"></div>
<div style="left:244px;top:431px;width:1px;height:16px;background:#d6d6d6;"></div>
<div style="left:300px;top:431px;width:1px;height:16px;background:#d6d6d6;"></div>
<div style="left:359px;top:431px;width:1px;height:16px;background:#d6d6d6;"></div>
<div style="left:389px;top:431px;width:1px;height:16px;background:#d6d6d6;"></div>
<div style="left:433px;top:431px;width:1px;height:16px;background:#d6d6d6;"></div>
<div style="left:493px;top:431px;width:1px;height:16px;background:#d6d6d6;"></div>
<div style="left:548px;top:431px;width:1px;height:16px;background:#d6d6d6;"></div>
<div style="left:606px;top:431px;width:1px;height:16px;background:#d6d6d6;"></div>
<div style="left:667px;top:431px;width:1px;height:16px;background:#d6d6d6;"></div>
<div style="left:724px;top:431px;width:1px;height:16px;background:#d6d6d6;"></div>
<div style="left:777px;top:431px;width:1px;height:16px;background:#d6d6d6;"></div>
<div style="left:826px;top:431px;width:1px;height:16px;background:#d6d6d6;"></div>
<div style="left:881px;top:431px;width:1px;height:16px;background:#d6d6d6;"></div>
<div style="left:944px;top:431px;width:1px;height:16px;background:#d6d6d6;"></div>
<div style="left:1010px;top:431px;width:1px;height:16px;background:#d6d6d6;"></div>
<div style="left:1092px;top:431px;width:1px;height:16px;background:#d6d6d6;"></div>
<div style="left:92px;top:445px;width:1px;height:16px;background:#d6d6d6;"></div>
<div style="left:107px;top:445px;width:1px;height:16px;background:#cdcdcd;"></div>
<div style="left:130px;top:445px;width:1px;height:16px;background:#d6d6d6;"></div>
<div style="left:244px;top:445px;width:1px;height:16px;background:#d6d6d6;"></div>
<div style="left:300px;top:445px;width:1px;height:16px;background:#d6d6d6;"></div>
<div style="left:359px;top:445px;width:1px;height:16px;background:#d6d6d6;"></div>
<div style="left:389px;top:445px;width:1px;height:16px;background:#d6d6d6;"></div>
<div style="left:433px;top:445px;width:1px;height:16px;background:#d6d6d6;"></div>
<div style="left:493px;top:445px;width:1px;height:16px;background:#d6d6d6;"></div>
<div style="left:548px;top:445px;width:1px;height:16px;background:#d6d6d6;"></div>
<div style="left:606px;top:445px;width:1px;height:16px;background:#d6d6d6;"></div>
<div style="left:667px;top:445px;width:1px;height:16px;background:#d6d6d6;"></div>
<div style="left:724px;top:445px;width:1px;height:16px;background:#d6d6d6;"></div>
<div style="left:777px;top:445px;width:1px;height:16px;background:#d6d6d6;"></div>
<div style="left:826px;top:445px;width:1px;height:16px;background:#d6d6d6;"></div>
<div style="left:881px;top:445px;width:1px;height:16px;background:#d6d6d6;"></div>
<div style="left:944px;top:445px;width:1px;height:16px;background:#d6d6d6;"></div>
<div style="left:1010px;top:445px;width:1px;height:16px;background:#d6d6d6;"></div>
<div style="left:1092px;top:445px;width:1px;height:16px;background:#d6d6d6;"></div>
<div style="left:92px;top:459px;width:1px;height:16px;background:#d6d6d6;"></div>
<div style="left:107px;top:459px;width:1px;height:16px;background:#cdcdcd;"></div>
<div style="left:130px;top:459px;width:1px;height:16px;background:#d6d6d6;"></div>
<div style="left:244px;top:459px;width:1px;height:16px;background:#d6d6d6;"></div>
<div style="left:300px;top:459px;width:1px;height:16px;background:#d6d6d6;"></div>
<div style="left:359px;top:459px;width:1px;height:16px;background:#d6d6d6;"></div>
<div style="left:389px;top:459px;width:1px;height:16px;background:#d6d6d6;"></div>
<div style="left:433px;top:459px;width:1px;height:16px;background:#d6d6d6;"></div>
<div style="left:493px;top:459px;width:1px;height:16px;background:#d6d6d6;"></div>
<div style="left:548px;top:459px;width:1px;height:16px;background:#d6d6d6;"></div>
<div style="left:606px;top:459px;width:1px;height:16px;background:#d6d6d6;"></div>
<div style="left:667px;top:459px;width:1px;height:16px;background:#d6d6d6;"></div>
<div style="left:724px;top:459px;width:1px;height:16px;background:#d6d6d6;"></div>
<div style="left:777px;top:459px;width:1px;height:16px;background:#d6d6d6;"></div>
<div style="left:826px;top:459px;width:1px;height:16px;background:#d6d6d6;"></div>
<div style="left:881px;top:459px;width:1px;height:16px;background:#d6d6d6;"></div>
<div style="left:944px;top:459px;width:1px;height:16px;background:#d6d6d6;"></div>
<div style="left:1010px;top:459px;width:1px;height:16px;background:#d6d6d6;"></div>
<div style="left:1092px;top:459px;width:1px;height:16px;background:#d6d6d6;"></div>
<div style="left:92px;top:473px;width:1px;height:16px;background:#d6d6d6;"></div>
<div style="left:107px;top:473px;width:1px;height:16px;background:#cdcdcd;"></div>
<div style="left:130px;top:473px;width:1px;height:16px;background:#d6d6d6;"></div>
<div style="left:244px;top:473px;width:1px;height:16px;background:#d6d6d6;"></div>
<div style="left:300px;top:473px;width:1px;height:16px;background:#d6d6d6;"></div>
<div style="left:359px;top:473px;width:1px;height:16px;background:#d6d6d6;"></div>
<div style="left:389px;top:473px;width:1px;height:16px;background:#d6d6d6;"></div>
<div style="left:433px;top:473px;width:1px;height:16px;background:#d6d6d6;"></div>
<div style="left:493px;top:473px;width:1px;height:16px;background:#d6d6d6;"></div>
<div style="left:548px;top:473px;width:1px;height:16px;background:#d6d6d6;"></div>
<div style="left:606px;top:473px;width:1px;height:16px;background:#d6d6d6;"></div>
<div style="left:667px;top:473px;width:1px;height:16px;background:#d6d6d6;"></div>
<div style="left:724px;top:473px;width:1px;height:16px;background:#d6d6d6;"></div>
<div style="left:777px;top:473px;width:1px;height:16px;background:#d6d6d6;"></div>
<div style="left:826px;top:473px;width:1px;height:16px;background:#d6d6d6;"></div>
<div style="left:881px;top:473px;width:1px;height:16px;background:#d6d6d6;"></div>
<div style="left:944px;top:473px;width:1px;height:16px;background:#d6d6d6;"></div>
<div style="left:1010px;top:473px;width:1px;height:16px;background:#d6d6d6;"></div>
<div style="left:1092px;top:473px;width:1px;height:16px;background:#d6d6d6;"></div>
<div style="left:92px;top:487px;width:1px;height:16px;background:#d6d6d6;"></div>
<div style="left:107px;top:487px;width:1px;height:16px;background:#cdcdcd;"></div>
<div style="left:130px;top:487px;width:1px;height:16px;background:#d6d6d6;"></div>
<div style="left:244px;top:487px;width:1px;height:16px;background:#d6d6d6;"></div>
<div style="left:300px;top:487px;width:1px;height:16px;background:#d6d6d6;"></div>
<div style="left:359px;top:487px;width:1px;height:16px;background:#d6d6d6;"></div>
<div style="left:389px;top:487px;width:1px;height:16px;background:#d6d6d6;"></div>
<div style="left:433px;top:487px;width:1px;height:16px;background:#d6d6d6;"></div>
<div style="left:493px;top:487px;width:1px;height:16px;background:#d6d6d6;"></div>
<div style="left:548px;top:487px;width:1px;height:16px;background:#d6d6d6;"></div>
<div style="left:606px;top:487px;width:1px;height:16px;background:#d6d6d6;"></div>
<div style="left:667px;top:487px;width:1px;height:16px;background:#d6d6d6;"></div>
<div style="left:724px;top:487px;width:1px;height:16px;background:#d6d6d6;"></div>
<div style="left:777px;top:487px;width:1px;height:16px;background:#d6d6d6;"></div>
<div style="left:826px;top:487px;width:1px;height:16px;background:#d6d6d6;"></div>
<div style="left:881px;top:487px;width:1px;height:16px;background:#d6d6d6;"></div>
<div style="left:944px;top:487px;width:1px;height:16px;background:#d6d6d6;"></div>
<div style="left:1010px;top:487px;width:1px;height:16px;background:#d6d6d6;"></div>
<div style="left:1092px;top:487px;width:1px;height:16px;background:#d6d6d6;"></div>
<div style="left:92px;top:501px;width:1px;height:16px;background:#d6d6d6;"></div>
<div style="left:107px;top:501px;width:1px;height:16px;background:#cdcdcd;"></div>
<div style="left:130px;top:501px;width:1px;height:16px;background:#d6d6d6;"></div>
<div style="left:244px;top:501px;width:1px;height:16px;background:#d6d6d6;"></div>
<div style="left:300px;top:501px;width:1px;height:16px;background:#d6d6d6;"></div>
<div style="left:359px;top:501px;width:1px;height:16px;background:#d6d6d6;"></div>
<div style="left:389px;top:501px;width:1px;height:16px;background:#d6d6d6;"></div>
<div style="left:433px;top:501px;width:1px;height:16px;background:#d6d6d6;"></div>
<div style="left:493px;top:501px;width:1px;height:16px;background:#d6d6d6;"></div>
<div style="left:548px;top:501px;width:1px;height:16px;background:#d6d6d6;"></div>
<div style="left:606px;top:501px;width:1px;height:16px;background:#d6d6d6;"></div>
<div style="left:667px;top:501px;width:1px;height:16px;background:#d6d6d6;"></div>
<div style="left:724px;top:501px;width:1px;height:16px;background:#d6d6d6;"></div>
<div style="left:777px;top:501px;width:1px;height:16px;background:#d6d6d6;"></div>
<div style="left:826px;top:501px;width:1px;height:16px;background:#d6d6d6;"></div>
<div style="left:881px;top:501px;width:1px;height:16px;background:#d6d6d6;"></div>
<div style="left:944px;top:501px;width:1px;height:16px;background:#d6d6d6;"></div>
<div style="left:1010px;top:501px;width:1px;height:16px;background:#d6d6d6;"></div>
<div style="left:1092px;top:501px;width:1px;height:16px;background:#d6d6d6;"></div>
<div style="left:92px;top:515px;width:1px;height:16px;background:#d6d6d6;"></div>
<div style="left:107px;top:515px;width:1px;height:16px;background:#cdcdcd;"></div>
<div style="left:130px;top:515px;width:1px;height:16px;background:#d6d6d6;"></div>
<div style="left:244px;top:515px;width:1px;height:16px;background:#d6d6d6;"></div>
<div style="left:300px;top:515px;width:1px;height:16px;background:#d6d6d6;"></div>
<div style="left:359px;top:515px;width:1px;height:16px;background:#d6d6d6;"></div>
<div style="left:389px;top:515px;width:1px;height:16px;background:#d6d6d6;"></div>
<div style="left:433px;top:515px;width:1px;height:16px;background:#d6d6d6;"></div>
<div style="left:493px;top:515px;width:1px;height:16px;background:#d6d6d6;"></div>
<div style="left:548px;top:515px;width:1px;height:16px;background:#d6d6d6;"></div>
<div style="left:606px;top:515px;width:1px;height:16px;background:#d6d6d6;"></div>
<div style="left:667px;top:515px;width:1px;height:16px;background:#d6d6d6;"></div>
<div style="left:724px;top:515px;width:1px;height:16px;background:#d6d6d6;"></div>
<div style="left:777px;top:515px;width:1px;height:16px;background:#d6d6d6;"></div>
<div style="left:826px;top:515px;width:1px;height:16px;background:#d6d6d6;"></div>
<div style="left:881px;top:515px;width:1px;height:16px;background:#d6d6d6;"></div>
<div style="left:944px;top:515px;width:1px;height:16px;background:#d6d6d6;"></div>
<div style="left:1010px;top:515px;width:1px;height:16px;background:#d6d6d6;"></div>
<div style="left:1092px;top:515px;width:1px;height:16px;background:#d6d6d6;"></div>
<div style="left:92px;top:529px;width:1px;height:16px;background:#d6d6d6;"></div>
<div style="left:107px;top:529px;width:1px;height:16px;background:#cdcdcd;"></div>
<div style="left:130px;top:529px;width:1px;height:16px;background:#d6d6d6;"></div>
<div style="left:244px;top:529px;width:1px;height:16px;background:#d6d6d6;"></div>
<div style="left:300px;top:529px;width:1px;height:16px;background:#d6d6d6;"></div>
<div style="left:359px;top:529px;width:1px;height:16px;background:#d6d6d6;"></div>
<div style="left:389px;top:529px;width:1px;height:16px;background:#d6d6d6;"></div>
<div style="left:433px;top:529px;width:1px;height:16px;background:#d6d6d6;"></div>
<div style="left:493px;top:529px;width:1px;height:16px;background:#d6d6d6;"></div>
<div style="left:548px;top:529px;width:1px;height:16px;background:#d6d6d6;"></div>
<div style="left:606px;top:529px;width:1px;height:16px;background:#d6d6d6;"></div>
<div style="left:667px;top:529px;width:1px;height:16px;background:#d6d6d6;"></div>
<div style="left:724px;top:529px;width:1px;height:16px;background:#d6d6d6;"></div>
<div style="left:777px;top:529px;width:1px;height:16px;background:#d6d6d6;"></div>
<div style="left:826px;top:529px;width:1px;height:16px;background:#d6d6d6;"></div>
<div style="left:881px;top:529px;width:1px;height:16px;background:#d6d6d6;"></div>
<div style="left:944px;top:529px;width:1px;height:16px;background:#d6d6d6;"></div>
<div style="left:1010px;top:529px;width:1px;height:16px;background:#d6d6d6;"></div>
<div style="left:1092px;top:529px;width:1px;height:16px;background:#d6d6d6;"></div>
<div style="left:92px;top:543px;width:1px;height:16px;background:#d6d6d6;"></div>
<div style="left:107px;top:543px;width:1px;height:16px;background:#cdcdcd;"></div>
<div style="left:130px;top:543px;width:1px;height:16px;background:#d6d6d6;"></div>
<div style="left:244px;top:543px;width:1px;height:16px;background:#d6d6d6;"></div>
<div style="left:300px;top:543px;width:1px;height:16px;background:#d6d6d6;"></div>
<div style="left:359px;top:543px;width:1px;height:16px;background:#d6d6d6;"></div>
<div style="left:389px;top:543px;width:1px;height:16px;background:#d6d6d6;"></div>
<div style="left:433px;top:543px;width:1px;height:16px;background:#d6d6d6;"></div>
<div style="left:493px;top:543px;width:1px;height:16px;background:#d6d6d6;"></div>
<div style="left:548px;top:543px;width:1px;height:16px;background:#d6d6d6;"></div>
<div style="left:606px;top:543px;width:1px;height:16px;background:#d6d6d6;"></div>
<div style="left:667px;top:543px;width:1px;height:16px;background:#d6d6d6;"></div>
<div style="left:724px;top:543px;width:1px;height:16px;background:#d6d6d6;"></div>
<div style="left:777px;top:543px;width:1px;height:16px;background:#d6d6d6;"></div>
<div style="left:826px;top:543px;width:1px;height:16px;background:#d6d6d6;"></div>
<div style="left:881px;top:543px;width:1px;height:16px;background:#d6d6d6;"></div>
<div style="left:944px;top:543px;width:1px;height:16px;background:#d6d6d6;"></div>
<div style="left:1010px;top:543px;width:1px;height:16px;background:#d6d6d6;"></div>
<div style="left:1092px;top:543px;width:1px;height:16px;background:#d6d6d6;"></div>
<div style="left:92px;top:557px;width:1px;height:16px;background:#d6d6d6;"></div>
<div style="left:107px;top:557px;width:1px;height:16px;background:#cdcdcd;"></div>
<div style="left:130px;top:557px;width:1px;height:16px;background:#d6d6d6;"></div>
<div style="left:244px;top:557px;width:1px;height:16px;background:#d6d6d6;"></div>
<div style="left:300px;top:557px;width:1px;height:16px;background:#d6d6d6;"></div>
<div style="left:359px;top:557px;width:1px;height:16px;background:#d6d6d6;"></div>
<div style="left:389px;top:557px;width:1px;height:16px;background:#d6d6d6;"></div>
<div style="left:433px;top:557px;width:1px;height:16px;background:#d6d6d6;"></div>
<div style="left:493px;top:557px;width:1px;height:16px;background:#d6d6d6;"></div>
<div style="left:548px;top:557px;width:1px;height:16px;background:#d6d6d6;"></div>
<div style="left:606px;top:557px;width:1px;height:16px;background:#d6d6d6;"></div>
<div style="left:667px;top:557px;width:1px;height:16px;background:#d6d6d6;"></div>
<div style="left:724px;top:557px;width:1px;height:16px;background:#d6d6d6;"></div>
<div style="left:777px;top:557px;width:1px;height:16px;background:#d6d6d6;"></div>
<div style="left:826px;top:557px;width:1px;height:16px;background:#d6d6d6;"></div>
<div style="left:881px;top:557px;width:1px;height:16px;background:#d6d6d6;"></div>
<div style="left:944px;top:557px;width:1px;height:16px;background:#d6d6d6;"></div>
<div style="left:1010px;top:557px;width:1px;height:16px;background:#d6d6d6;"></div>
<div style="left:1092px;top:557px;width:1px;height:16px;background:#d6d6d6;"></div>
<div style="left:92px;top:571px;width:1px;height:16px;background:#d6d6d6;"></div>
<div style="left:107px;top:571px;width:1px;height:16px;background:#cdcdcd;"></div>
<div style="left:130px;top:571px;width:1px;height:16px;background:#d6d6d6;"></div>
<div style="left:244px;top:571px;width:1px;height:16px;background:#d6d6d6;"></div>
<div style="left:300px;top:571px;width:1px;height:16px;background:#d6d6d6;"></div>
<div style="left:359px;top:571px;width:1px;height:16px;background:#d6d6d6;"></div>
<div style="left:389px;top:571px;width:1px;height:16px;background:#d6d6d6;"></div>
<div style="left:433px;top:571px;width:1px;height:16px;background:#d6d6d6;"></div>
<div style="left:493px;top:571px;width:1px;height:16px;background:#d6d6d6;"></div>
<div style="left:548px;top:571px;width:1px;height:16px;background:#d6d6d6;"></div>
<div style="left:606px;top:571px;width:1px;height:16px;background:#d6d6d6;"></div>
<div style="left:667px;top:571px;width:1px;height:16px;background:#d6d6d6;"></div>
<div style="left:724px;top:571px;width:1px;height:16px;background:#d6d6d6;"></div>
<div style="left:777px;top:571px;width:1px;height:16px;background:#d6d6d6;"></div>
<div style="left:826px;top:571px;width:1px;height:16px;background:#d6d6d6;"></div>
<div style="left:881px;top:571px;width:1px;height:16px;background:#d6d6d6;"></div>
<div style="left:944px;top:571px;width:1px;height:16px;background:#d6d6d6;"></div>
<div style="left:1010px;top:571px;width:1px;height:16px;background:#d6d6d6;"></div>
<div style="left:1092px;top:571px;width:1px;height:16px;background:#d6d6d6;"></div>
<div style="left:92px;top:585px;width:1px;height:16px;background:#d6d6d6;"></div>
<div style="left:107px;top:585px;width:1px;height:16px;background:#cdcdcd;"></div>
<div style="left:130px;top:585px;width:1px;height:16px;background:#d6d6d6;"></div>
<div style="left:244px;top:585px;width:1px;height:16px;background:#d6d6d6;"></div>
<div style="left:300px;top:585px;width:1px;height:16px;background:#d6d6d6;"></div>
<div style="left:359px;top:585px;width:1px;height:16px;background:#d6d6d6;"></div>
<div style="left:389px;top:585px;width:1px;height:16px;background:#d6d6d6;"></div>
<div style="left:433px;top:585px;width:1px;height:16px;background:#d6d6d6;"></div>
<div style="left:493px;top:585px;width:1px;height:16px;background:#d6d6d6;"></div>
<div style="left:548px;top:585px;width:1px;height:16px;background:#d6d6d6;"></div>
<div style="left:606px;top:585px;width:1px;height:16px;background:#d6d6d6;"></div>
<div style="left:667px;top:585px;width:1px;height:16px;background:#d6d6d6;"></div>
<div style="left:724px;top:585px;width:1px;height:16px;background:#d6d6d6;"></div>
<div style="left:777px;top:585px;width:1px;height:16px;background:#d6d6d6;"></div>
<div style="left:826px;top:585px;width:1px;height:16px;background:#d6d6d6;"></div>
<div style="left:881px;top:585px;width:1px;height:16px;background:#d6d6d6;"></div>
<div style="left:944px;top:585px;width:1px;height:16px;background:#d6d6d6;"></div>
<div style="left:1010px;top:585px;width:1px;height:16px;background:#d6d6d6;"></div>
<div style="left:1092px;top:585px;width:1px;height:16px;background:#d6d6d6;"></div>
<div style="left:130px;top:239px;width:1px;height:16px;background:#fff;"></div>
<div style="left:130px;top:253px;width:1px;height:16px;background:#fff;"></div>
<div style="left:244px;top:253px;width:1px;height:16px;background:#fff;"></div>
<div style="left:130px;top:267px;width:1px;height:16px;background:#fff;"></div>
<div style="left:244px;top:267px;width:1px;height:16px;background:#fff;"></div>
<div style="left:130px;top:281px;width:1px;height:16px;background:#fff;"></div>
<div style="left:244px;top:281px;width:1px;height:16px;background:#fff;"></div>
<div style="left:130px;top:295px;width:1px;height:16px;background:#fff;"></div>
<div style="left:244px;top:295px;width:1px;height:16px;background:#fff;"></div>
<div style="left:130px;top:309px;width:1px;height:16px;background:#fff;"></div>
<div style="left:244px;top:309px;width:1px;height:16px;background:#fff;"></div>
<div style="left:130px;top:323px;width:1px;height:16px;background:#fff;"></div>
<div style="left:130px;top:361px;width:1px;height:16px;background:#fff;"></div>
<div style="left:130px;top:375px;width:1px;height:16px;background:#fff;"></div>
<div style="left:130px;top:389px;width:1px;height:16px;background:#fff;"></div>
<div style="left:130px;top:403px;width:1px;height:16px;background:#fff;"></div>
<div style="left:130px;top:417px;width:1px;height:16px;background:#fff;"></div>
<div style="left:130px;top:431px;width:1px;height:16px;background:#fff;"></div>
<div style="left:130px;top:445px;width:1px;height:16px;background:#fff;"></div>
<div style="left:130px;top:459px;width:1px;height:16px;background:#fff;"></div>
<div style="left:244px;top:459px;width:1px;height:16px;background:#fff;"></div>
<div style="left:130px;top:473px;width:1px;height:16px;background:#fff;"></div>
<div style="left:130px;top:487px;width:1px;height:16px;background:#fff;"></div>
<div style="left:244px;top:487px;width:1px;height:16px;background:#fff;"></div>
<div style="left:130px;top:501px;width:1px;height:16px;background:#fff;"></div>
<div style="left:130px;top:515px;width:1px;height:16px;background:#fff;"></div>
<div style="left:130px;top:529px;width:1px;height:16px;background:#fff;"></div>
<div style="left:130px;top:543px;width:1px;height:16px;background:#fff;"></div>
<div style="left:130px;top:557px;width:1px;height:16px;background:#fff;"></div>
<div style="left:130px;top:571px;width:1px;height:16px;background:#fff;"></div>
<div style="left:130px;top:585px;width:1px;height:16px;background:#fff;"></div>
<div style="left:92px;top:215px;width:1px;height:26px;background:#fff;"></div>
<div style="left:130px;top:215px;width:1px;height:26px;background:#fff;"></div>
<div style="left:92px;top:337px;width:1px;height:26px;background:#fff;"></div>
<div style="left:130px;top:337px;width:1px;height:26px;background:#fff;"></div>
<div style="left:92px;top:18px;width:1px;height:21px;background:#fff;"></div>
<div style="left:130px;top:18px;width:1px;height:21px;background:#fff;"></div>
<div style="left:92px;top:37px;width:1px;height:20px;background:#fff;"></div>
<div style="left:130px;top:37px;width:1px;height:20px;background:#fff;"></div>
<div style="left:244px;top:37px;width:1px;height:20px;background:#fff;"></div>
<div style="left:433px;top:37px;width:1px;height:20px;background:#fff;"></div>
<div style="left:881px;top:18px;width:1px;height:21px;background:#fff;"></div>
<div style="left:944px;top:18px;width:1px;height:21px;background:#fff;"></div>
<div style="left:944px;top:37px;width:1px;height:20px;background:#fff;"></div>
<div style="left:130px;top:74px;width:1px;height:17px;background:#fff;"></div>
<div style="left:244px;top:74px;width:1px;height:17px;background:#fff;"></div>
<div style="left:66px;top:37px;width:1029px;height:1px;background:#e2e2e2;"></div>
<div style="left:66px;top:116px;width:1029px;height:1px;background:#e2e2e2;"></div>
<div style="left:66px;top:166px;width:1029px;height:1px;background:#e2e2e2;"></div>
<div style="left:66px;top:216px;width:1029px;height:1px;background:#e2e2e2;"></div>
<div style="left:66px;top:239px;width:1029px;height:1px;background:#e2e2e2;"></div>
<div style="left:66px;top:253px;width:1029px;height:1px;background:#e2e2e2;"></div>
<div style="left:66px;top:267px;width:1029px;height:1px;background:#e2e2e2;"></div>
<div style="left:66px;top:281px;width:1029px;height:1px;background:#e2e2e2;"></div>
<div style="left:66px;top:295px;width:1029px;height:1px;background:#e2e2e2;"></div>
<div style="left:66px;top:309px;width:1029px;height:1px;background:#e2e2e2;"></div>
<div style="left:66px;top:323px;width:1029px;height:1px;background:#e2e2e2;"></div>
<div style="left:66px;top:337px;width:1029px;height:1px;background:#e2e2e2;"></div>
<div style="left:66px;top:361px;width:1029px;height:1px;background:#e2e2e2;"></div>
<div style="left:66px;top:375px;width:1029px;height:1px;background:#e2e2e2;"></div>
<div style="left:66px;top:389px;width:1029px;height:1px;background:#e2e2e2;"></div>
<div style="left:66px;top:403px;width:1029px;height:1px;background:#e2e2e2;"></div>
<div style="left:66px;top:417px;width:1029px;height:1px;background:#e2e2e2;"></div>
<div style="left:66px;top:431px;width:1029px;height:1px;background:#e2e2e2;"></div>
<div style="left:66px;top:445px;width:1029px;height:1px;background:#e2e2e2;"></div>
<div style="left:66px;top:459px;width:1029px;height:1px;background:#e2e2e2;"></div>
<div style="left:66px;top:473px;width:1029px;height:1px;background:#e2e2e2;"></div>
<div style="left:66px;top:487px;width:1029px;height:1px;background:#e2e2e2;"></div>
<div style="left:66px;top:501px;width:1029px;height:1px;background:#e2e2e2;"></div>
<div style="left:66px;top:515px;width:1029px;height:1px;background:#e2e2e2;"></div>
<div style="left:66px;top:529px;width:1029px;height:1px;background:#e2e2e2;"></div>
<div style="left:66px;top:543px;width:1029px;height:1px;background:#e2e2e2;"></div>
<div style="left:66px;top:557px;width:1029px;height:1px;background:#e2e2e2;"></div>
<div style="left:66px;top:571px;width:1029px;height:1px;background:#e2e2e2;"></div>
<div style="left:66px;top:585px;width:1029px;height:1px;background:#e2e2e2;"></div>
<div style="left:66px;top:599px;width:1029px;height:1px;background:#e2e2e2;"></div>
<div style="left:66px;top:73px;width:1029px;height:1px;background:#e2e2e2;"></div>
<div style="left:66px;top:109px;width:1026.5px;height:7px;background:#c0c0c0;"></div>
<div style="left:66px;top:142px;width:1026.5px;height:24px;background:#c0c0c0;"></div>
<div style="left:66px;top:192px;width:1026.5px;height:24px;background:#c0c0c0;"></div>
<div style="left:434px;top:240px;width:114.5px;height:14px;background:#ccffcc;"></div>
<div style="left:607px;top:240px;width:60.5px;height:14px;background:#ccffcc;"></div>
<div style="left:725px;top:240px;width:52.5px;height:14px;background:#ccffcc;"></div>
<div style="left:827px;top:240px;width:117.5px;height:14px;background:#ccffcc;"></div>
<div style="left:434px;top:254px;width:114.5px;height:14px;background:#ccffcc;"></div>
<div style="left:607px;top:254px;width:60.5px;height:14px;background:#ccffcc;"></div>
<div style="left:725px;top:254px;width:52.5px;height:14px;background:#ccffcc;"></div>
<div style="left:827px;top:254px;width:117.5px;height:14px;background:#ccffcc;"></div>
<div style="left:434px;top:268px;width:114.5px;height:14px;background:#ccffcc;"></div>
<div style="left:607px;top:268px;width:60.5px;height:14px;background:#ccffcc;"></div>
<div style="left:725px;top:268px;width:52.5px;height:14px;background:#ccffcc;"></div>
<div style="left:827px;top:268px;width:117.5px;height:14px;background:#ccffcc;"></div>
<div style="left:434px;top:282px;width:114.5px;height:14px;background:#ccffcc;"></div>
<div style="left:607px;top:282px;width:60.5px;height:14px;background:#ccffcc;"></div>
<div style="left:725px;top:282px;width:52.5px;height:14px;background:#ccffcc;"></div>
<div style="left:827px;top:282px;width:117.5px;height:14px;background:#ccffcc;"></div>
<div style="left:434px;top:296px;width:114.5px;height:14px;background:#ccffcc;"></div>
<div style="left:607px;top:296px;width:60.5px;height:14px;background:#ccffcc;"></div>
<div style="left:725px;top:296px;width:52.5px;height:14px;background:#ccffcc;"></div>
<div style="left:827px;top:296px;width:117.5px;height:14px;background:#ccffcc;"></div>
<div style="left:434px;top:310px;width:114.5px;height:14px;background:#ccffcc;"></div>
<div style="left:607px;top:310px;width:60.5px;height:14px;background:#ccffcc;"></div>
<div style="left:725px;top:310px;width:52.5px;height:14px;background:#ccffcc;"></div>
<div style="left:827px;top:310px;width:117.5px;height:14px;background:#ccffcc;"></div>
<div style="left:434px;top:324px;width:114.5px;height:14px;background:#ccffcc;"></div>
<div style="left:607px;top:324px;width:60.5px;height:14px;background:#ccffcc;"></div>
<div style="left:725px;top:324px;width:52.5px;height:14px;background:#ccffcc;"></div>
<div style="left:827px;top:324px;width:117.5px;height:14px;background:#ccffcc;"></div>
<div style="left:434px;top:376px;width:114.5px;height:14px;background:#ccffcc;"></div>
<div style="left:607px;top:376px;width:60.5px;height:14px;background:#ccffcc;"></div>
<div style="left:725px;top:376px;width:52.5px;height:14px;background:#ccffcc;"></div>
<div style="left:827px;top:376px;width:117.5px;height:14px;background:#ccffcc;"></div>
<div style="left:434px;top:390px;width:114.5px;height:14px;background:#ccffcc;"></div>
<div style="left:607px;top:390px;width:60.5px;height:14px;background:#ccffcc;"></div>
<div style="left:725px;top:390px;width:52.5px;height:14px;background:#ccffcc;"></div>
<div style="left:827px;top:390px;width:117.5px;height:14px;background:#ccffcc;"></div>
<div style="left:434px;top:404px;width:114.5px;height:14px;background:#ccffcc;"></div>
<div style="left:607px;top:404px;width:60.5px;height:14px;background:#ccffcc;"></div>
<div style="left:725px;top:404px;width:52.5px;height:14px;background:#ccffcc;"></div>
<div style="left:827px;top:404px;width:117.5px;height:14px;background:#ccffcc;"></div>
<div style="left:434px;top:418px;width:114.5px;height:14px;background:#ccffcc;"></div>
<div style="left:607px;top:418px;width:60.5px;height:14px;background:#ccffcc;"></div>
<div style="left:725px;top:418px;width:52.5px;height:14px;background:#ccffcc;"></div>
<div style="left:827px;top:418px;width:117.5px;height:14px;background:#ccffcc;"></div>
<div style="left:434px;top:432px;width:114.5px;height:14px;background:#ccffcc;"></div>
<div style="left:607px;top:432px;width:60.5px;height:14px;background:#ccffcc;"></div>
<div style="left:725px;top:432px;width:52.5px;height:14px;background:#ccffcc;"></div>
<div style="left:827px;top:432px;width:117.5px;height:14px;background:#ccffcc;"></div>
<div style="left:434px;top:446px;width:114.5px;height:14px;background:#ccffcc;"></div>
<div style="left:607px;top:446px;width:60.5px;height:14px;background:#ccffcc;"></div>
<div style="left:725px;top:446px;width:52.5px;height:14px;background:#ccffcc;"></div>
<div style="left:827px;top:446px;width:117.5px;height:14px;background:#ccffcc;"></div>
<div style="left:434px;top:460px;width:114.5px;height:14px;background:#ccffcc;"></div>
<div style="left:607px;top:460px;width:60.5px;height:14px;background:#ccffcc;"></div>
<div style="left:725px;top:460px;width:52.5px;height:14px;background:#ccffcc;"></div>
<div style="left:827px;top:460px;width:117.5px;height:14px;background:#ccffcc;"></div>
<div style="left:434px;top:474px;width:114.5px;height:14px;background:#ccffcc;"></div>
<div style="left:607px;top:474px;width:60.5px;height:14px;background:#ccffcc;"></div>
<div style="left:725px;top:474px;width:52.5px;height:14px;background:#ccffcc;"></div>
<div style="left:827px;top:474px;width:117.5px;height:14px;background:#ccffcc;"></div>
<div style="left:434px;top:488px;width:114.5px;height:14px;background:#ccffcc;"></div>
<div style="left:607px;top:488px;width:60.5px;height:14px;background:#ccffcc;"></div>
<div style="left:725px;top:488px;width:52.5px;height:14px;background:#ccffcc;"></div>
<div style="left:827px;top:488px;width:117.5px;height:14px;background:#ccffcc;"></div>
<div style="left:434px;top:502px;width:114.5px;height:14px;background:#ccffcc;"></div>
<div style="left:607px;top:502px;width:60.5px;height:14px;background:#ccffcc;"></div>
<div style="left:725px;top:502px;width:52.5px;height:14px;background:#ccffcc;"></div>
<div style="left:827px;top:502px;width:117.5px;height:14px;background:#ccffcc;"></div>
<div style="left:434px;top:516px;width:114.5px;height:14px;background:#ccffcc;"></div>
<div style="left:607px;top:516px;width:60.5px;height:14px;background:#ccffcc;"></div>
<div style="left:725px;top:516px;width:52.5px;height:14px;background:#ccffcc;"></div>
<div style="left:827px;top:516px;width:117.5px;height:14px;background:#ccffcc;"></div>
<div style="left:434px;top:530px;width:114.5px;height:14px;background:#ccffcc;"></div>
<div style="left:607px;top:530px;width:60.5px;height:14px;background:#ccffcc;"></div>
<div style="left:725px;top:530px;width:52.5px;height:14px;background:#ccffcc;"></div>
<div style="left:827px;top:530px;width:117.5px;height:14px;background:#ccffcc;"></div>
<div style="left:434px;top:544px;width:114.5px;height:14px;background:#ccffcc;"></div>
<div style="left:607px;top:544px;width:60.5px;height:14px;background:#ccffcc;"></div>
<div style="left:725px;top:544px;width:52.5px;height:14px;background:#ccffcc;"></div>
<div style="left:827px;top:544px;width:117.5px;height:14px;background:#ccffcc;"></div>
<div style="left:434px;top:558px;width:114.5px;height:14px;background:#ccffcc;"></div>
<div style="left:607px;top:558px;width:60.5px;height:14px;background:#ccffcc;"></div>
<div style="left:725px;top:558px;width:52.5px;height:14px;background:#ccffcc;"></div>
<div style="left:827px;top:558px;width:117.5px;height:14px;background:#ccffcc;"></div>
<div style="left:434px;top:572px;width:114.5px;height:14px;background:#ccffcc;"></div>
<div style="left:607px;top:572px;width:60.5px;height:14px;background:#ccffcc;"></div>
<div style="left:725px;top:572px;width:52.5px;height:14px;background:#ccffcc;"></div>
<div style="left:827px;top:572px;width:117.5px;height:14px;background:#ccffcc;"></div>
<div style="left:434px;top:586px;width:114.5px;height:14px;background:#ccffcc;"></div>
<div style="left:607px;top:586px;width:60.5px;height:14px;background:#ccffcc;"></div>
<div style="left:725px;top:586px;width:52.5px;height:14px;background:#ccffcc;"></div>
<div style="left:827px;top:586px;width:117.5px;height:14px;background:#ccffcc;"></div>
<div style="left:66px;top:55px;width:1027px;height:1px;background:#6a6a6a;"></div>
<div style="left:66px;top:56px;width:1027px;height:1px;background:#a8a8a8;"></div>
<div style="left:66px;top:57px;width:1027px;height:1px;background:#5c5c5c;"></div>
<div style="left:66px;top:58px;width:1027px;height:1px;background:#a6a6a6;"></div>
<div style="left:66px;top:73px;width:1027px;height:1px;background:#bdbdbd;"></div>
<div style="left:66px;top:74px;width:1027px;height:1px;background:#5a5a5a;"></div>
<div style="left:66px;top:90px;width:1027px;height:1px;background:#4a4a4a;"></div>
<div style="left:66px;top:91px;width:1027px;height:1px;background:#a0a0a0;"></div>
<div style="left:66px;top:92px;width:1027px;height:1px;background:#6a6a6a;"></div>
<div style="left:66px;top:93px;width:1027px;height:1px;background:#5a5a5a;opacity:.55;"></div>
<div style="left:107px;top:74px;width:1px;height:16px;background:#000;"></div>
<div style="left:107px;top:93px;width:1px;height:15px;background:#000;"></div>
<div style="left:300px;top:74px;width:1px;height:16px;background:#000;"></div>
<div style="left:300px;top:93px;width:1px;height:15px;background:#000;"></div>
<div style="left:359px;top:74px;width:1px;height:16px;background:#000;"></div>
<div style="left:359px;top:93px;width:1px;height:15px;background:#000;"></div>
<div style="left:389px;top:74px;width:1px;height:16px;background:#000;"></div>
<div style="left:389px;top:93px;width:1px;height:15px;background:#000;"></div>
<div style="left:433px;top:74px;width:1px;height:16px;background:#000;"></div>
<div style="left:433px;top:93px;width:1px;height:15px;background:#000;"></div>
<div style="left:493px;top:74px;width:1px;height:16px;background:#000;"></div>
<div style="left:493px;top:93px;width:1px;height:15px;background:#000;"></div>
<div style="left:548px;top:74px;width:1px;height:16px;background:#000;"></div>
<div style="left:548px;top:93px;width:1px;height:15px;background:#000;"></div>
<div style="left:606px;top:74px;width:1px;height:16px;background:#000;"></div>
<div style="left:606px;top:93px;width:1px;height:15px;background:#000;"></div>
<div style="left:667px;top:74px;width:1px;height:16px;background:#000;"></div>
<div style="left:667px;top:93px;width:1px;height:15px;background:#000;"></div>
<div style="left:724px;top:74px;width:1px;height:16px;background:#000;"></div>
<div style="left:724px;top:93px;width:1px;height:15px;background:#000;"></div>
<div style="left:777px;top:74px;width:1px;height:16px;background:#000;"></div>
<div style="left:777px;top:93px;width:1px;height:15px;background:#000;"></div>
<div style="left:826px;top:74px;width:1px;height:16px;background:#000;"></div>
<div style="left:826px;top:93px;width:1px;height:15px;background:#000;"></div>
<div style="left:881px;top:74px;width:1px;height:16px;background:#000;"></div>
<div style="left:881px;top:93px;width:1px;height:15px;background:#000;"></div>
<div style="left:944px;top:74px;width:1px;height:16px;background:#000;"></div>
<div style="left:944px;top:93px;width:1px;height:15px;background:#000;"></div>
<div style="left:1010px;top:74px;width:1px;height:16px;background:#000;"></div>
<div style="left:1010px;top:93px;width:1px;height:15px;background:#000;"></div>
<div style="left:1092px;top:55px;width:1px;height:541px;background:#000;"></div>
<div style="left:1093px;top:55px;width:1px;height:541px;background:#000;opacity:.35;"></div>
<svg style="left:549px;top:404px" width="6" height="6"><path d="M0 0H5L0 5Z" fill="#1e7b34"/></svg>
<div style="left:108px;top:241.5px;width:136px;height:16px;overflow:hidden;"><span style="left:2px;top:0;font-size:10.67px;color:#000;letter-spacing:0.065px;">Vloer-/dakbalklaag 70x195</span></div>
<div style="left:245px;top:241.5px;width:55px;height:16px;overflow:hidden;"><span style="right:5.74px;top:0;font-size:10.67px;color:#000;letter-spacing:0.06px;">10,00</span></div>
<div style="right:741.64px;top:241.5px;font-size:10.67px;color:#000;letter-spacing:0.06px;">16,67</div>
<div style="right:667.64px;top:241.5px;font-size:10.67px;color:#000;letter-spacing:0.06px;">0,40</div>
<div style="right:608.64px;top:241.5px;font-size:10.67px;color:#000;letter-spacing:0.06px;">6,67</div>
<div style="right:553.14px;top:241.5px;font-size:10.67px;color:#000;letter-spacing:0.06px;">400</div>
<div style="right:494.64px;top:241.5px;font-size:10.67px;color:#000;letter-spacing:0.06px;">9,93</div>
<div style="right:433.64px;top:241.5px;font-size:10.67px;color:#000;letter-spacing:0.06px;">165</div>
<div style="right:376.64px;top:241.5px;font-size:10.67px;color:#000;letter-spacing:0.06px;">2,50</div>
<div style="right:323.64px;top:241.5px;font-size:10.67px;color:#000;letter-spacing:0.06px;">42</div>
<div style="right:287.2px;top:241.5px;font-size:10.67px;color:#000;">-</div>
<div style="right:233.2px;top:241.5px;font-size:10.67px;color:#000;">-</div>
<div style="right:157.14px;top:241.5px;font-size:10.67px;color:#000;letter-spacing:0.06px;">607</div>
<div style="left:363px;top:241.5px;font-size:10.67px;color:#000;letter-spacing:0.1px;">m1</div>
<div style="left:108px;top:255.5px;width:192px;height:16px;overflow:hidden;"><span style="left:2px;top:0;font-size:10.67px;color:#000;letter-spacing:0.053px;">Vloer-/dakbeschot T&amp;G underlay 18mm</span></div>
<div style="right:741.64px;top:255.5px;font-size:10.67px;color:#000;letter-spacing:0.06px;">10,00</div>
<div style="right:667.64px;top:255.5px;font-size:10.67px;color:#000;letter-spacing:0.06px;">0,25</div>
<div style="right:608.64px;top:255.5px;font-size:10.67px;color:#000;letter-spacing:0.06px;">2,50</div>
<div style="right:553.14px;top:255.5px;font-size:10.67px;color:#000;letter-spacing:0.06px;">150</div>
<div style="right:494.64px;top:255.5px;font-size:10.67px;color:#000;letter-spacing:0.06px;">12,85</div>
<div style="right:433.64px;top:255.5px;font-size:10.67px;color:#000;letter-spacing:0.06px;">129</div>
<div style="right:389.2px;top:255.5px;font-size:10.67px;color:#000;">-</div>
<div style="right:336.2px;top:255.5px;font-size:10.67px;color:#000;">-</div>
<div style="right:287.2px;top:255.5px;font-size:10.67px;color:#000;">-</div>
<div style="right:233.2px;top:255.5px;font-size:10.67px;color:#000;">-</div>
<div style="right:157.14px;top:255.5px;font-size:10.67px;color:#000;letter-spacing:0.06px;">279</div>
<div style="left:363px;top:255.5px;font-size:10.67px;color:#000;letter-spacing:0.1px;">m2</div>
<div style="left:108px;top:269.5px;width:192px;height:16px;overflow:hidden;"><span style="left:2px;top:0;font-size:10.67px;color:#000;letter-spacing:-0.004px;">Vloer-/dakbeschot T&amp;G OSB 18mm</span></div>
<div style="right:754.2px;top:269.5px;font-size:10.67px;color:#000;">-</div>
<div style="right:667.64px;top:269.5px;font-size:10.67px;color:#000;letter-spacing:0.06px;">0,25</div>
<div style="right:621.2px;top:269.5px;font-size:10.67px;color:#000;">-</div>
<div style="right:565.7px;top:269.5px;font-size:10.67px;color:#000;">-</div>
<div style="right:494.64px;top:269.5px;font-size:10.67px;color:#000;letter-spacing:0.06px;">9,35</div>
<div style="right:446.2px;top:269.5px;font-size:10.67px;color:#000;">-</div>
<div style="right:389.2px;top:269.5px;font-size:10.67px;color:#000;">-</div>
<div style="right:336.2px;top:269.5px;font-size:10.67px;color:#000;">-</div>
<div style="right:287.2px;top:269.5px;font-size:10.67px;color:#000;">-</div>
<div style="right:233.2px;top:269.5px;font-size:10.67px;color:#000;">-</div>
<div style="right:169.7px;top:269.5px;font-size:10.67px;color:#000;">-</div>
<div style="left:363px;top:269.5px;font-size:10.67px;color:#000;letter-spacing:0.1px;">m2</div>
<div style="left:108px;top:283.5px;width:192px;height:16px;overflow:hidden;"><span style="left:2px;top:0;font-size:10.67px;color:#000;letter-spacing:-0.03px;">Muurafdekking (m.plex 18mm)</span></div>
<div style="right:741.64px;top:283.5px;font-size:10.67px;color:#000;letter-spacing:0.06px;">10,00</div>
<div style="right:667.64px;top:283.5px;font-size:10.67px;color:#000;letter-spacing:0.06px;">0,40</div>
<div style="right:608.64px;top:283.5px;font-size:10.67px;color:#000;letter-spacing:0.06px;">4,00</div>
<div style="right:553.14px;top:283.5px;font-size:10.67px;color:#000;letter-spacing:0.06px;">240</div>
<div style="right:494.64px;top:283.5px;font-size:10.67px;color:#000;letter-spacing:0.06px;">11,45</div>
<div style="right:433.64px;top:283.5px;font-size:10.67px;color:#000;letter-spacing:0.06px;">114</div>
<div style="right:389.2px;top:283.5px;font-size:10.67px;color:#000;">-</div>
<div style="right:336.2px;top:283.5px;font-size:10.67px;color:#000;">-</div>
<div style="right:287.2px;top:283.5px;font-size:10.67px;color:#000;">-</div>
<div style="right:233.2px;top:283.5px;font-size:10.67px;color:#000;">-</div>
<div style="right:157.14px;top:283.5px;font-size:10.67px;color:#000;letter-spacing:0.06px;">354</div>
<div style="left:363px;top:283.5px;font-size:10.67px;color:#000;letter-spacing:0.1px;">m1</div>
<div style="left:108px;top:297.5px;width:192px;height:16px;overflow:hidden;"><span style="left:2px;top:0;font-size:10.67px;color:#000;letter-spacing:0.032px;">* vlonders FSC hardhout, losliggend</span></div>
<div style="right:741.64px;top:297.5px;font-size:10.67px;color:#000;letter-spacing:0.06px;">1,00</div>
<div style="right:667.64px;top:297.5px;font-size:10.67px;color:#000;letter-spacing:0.06px;">1,00</div>
<div style="right:608.64px;top:297.5px;font-size:10.67px;color:#000;letter-spacing:0.06px;">1,00</div>
<div style="right:553.14px;top:297.5px;font-size:10.67px;color:#000;letter-spacing:0.06px;">60</div>
<div style="right:494.64px;top:297.5px;font-size:10.67px;color:#000;letter-spacing:0.06px;">71,45</div>
<div style="right:433.64px;top:297.5px;font-size:10.67px;color:#000;letter-spacing:0.06px;">71</div>
<div style="right:389.2px;top:297.5px;font-size:10.67px;color:#000;">-</div>
<div style="right:336.2px;top:297.5px;font-size:10.67px;color:#000;">-</div>
<div style="right:287.2px;top:297.5px;font-size:10.67px;color:#000;">-</div>
<div style="right:233.2px;top:297.5px;font-size:10.67px;color:#000;">-</div>
<div style="right:157.14px;top:297.5px;font-size:10.67px;color:#000;letter-spacing:0.06px;">131</div>
<div style="left:363px;top:297.5px;font-size:10.67px;color:#000;letter-spacing:0.1px;">m2</div>
<div style="left:108px;top:311.5px;width:192px;height:16px;overflow:hidden;"><span style="left:2px;top:0;font-size:10.67px;color:#000;letter-spacing:0.065px;">* vlonders, losliggend steigerhout 32mm</span></div>
<div style="right:741.64px;top:311.5px;font-size:10.67px;color:#000;letter-spacing:0.06px;">1,00</div>
<div style="right:667.64px;top:311.5px;font-size:10.67px;color:#000;letter-spacing:0.06px;">1,00</div>
<div style="right:608.64px;top:311.5px;font-size:10.67px;color:#000;letter-spacing:0.06px;">1,00</div>
<div style="right:553.14px;top:311.5px;font-size:10.67px;color:#000;letter-spacing:0.06px;">60</div>
<div style="right:507.2px;top:311.5px;font-size:10.67px;color:#000;">-</div>
<div style="right:446.2px;top:311.5px;font-size:10.67px;color:#000;">-</div>
<div style="right:389.2px;top:311.5px;font-size:10.67px;color:#000;">-</div>
<div style="right:336.2px;top:311.5px;font-size:10.67px;color:#000;">-</div>
<div style="right:287.2px;top:311.5px;font-size:10.67px;color:#000;">-</div>
<div style="right:233.2px;top:311.5px;font-size:10.67px;color:#000;">-</div>
<div style="right:157.14px;top:311.5px;font-size:10.67px;color:#000;letter-spacing:0.06px;">60</div>
<div style="left:363px;top:311.5px;font-size:10.67px;color:#000;letter-spacing:0.1px;">m2</div>
<div style="left:108px;top:325.5px;width:192px;height:16px;overflow:hidden;"><span style="left:2px;top:0;font-size:10.67px;color:#000;letter-spacing:0.04px;">Dakopstanden geisoleerd</span></div>
<div style="left:68px;top:325.5px;font-size:10.67px;color:#000;">*</div>
<div style="right:741.64px;top:325.5px;font-size:10.67px;color:#000;letter-spacing:0.06px;">20,00</div>
<div style="right:667.64px;top:325.5px;font-size:10.67px;color:#000;letter-spacing:0.06px;">0,40</div>
<div style="right:608.64px;top:325.5px;font-size:10.67px;color:#000;letter-spacing:0.06px;">8,00</div>
<div style="right:553.14px;top:325.5px;font-size:10.67px;color:#000;letter-spacing:0.06px;">480</div>
<div style="right:494.64px;top:325.5px;font-size:10.67px;color:#000;letter-spacing:0.06px;">6,63</div>
<div style="right:433.64px;top:325.5px;font-size:10.67px;color:#000;letter-spacing:0.06px;">133</div>
<div style="right:389.2px;top:325.5px;font-size:10.67px;color:#000;">-</div>
<div style="right:336.2px;top:325.5px;font-size:10.67px;color:#000;">-</div>
<div style="right:287.2px;top:325.5px;font-size:10.67px;color:#000;">-</div>
<div style="right:233.2px;top:325.5px;font-size:10.67px;color:#000;">-</div>
<div style="right:157.14px;top:325.5px;font-size:10.67px;color:#000;letter-spacing:0.06px;">613</div>
<div style="left:363px;top:325.5px;font-size:10.67px;color:#000;letter-spacing:0.1px;">m1</div>
<div style="left:108px;top:362.5px;width:136px;height:17px;overflow:hidden;"><span style="left:2px;top:0;font-size:11.7px;color:#000;font-weight:bold;letter-spacing:0.024px;">Gevelbekleding; hout, dekkend</span></div>
<div style="left:245px;top:363.5px;width:55px;height:16px;overflow:hidden;"><span style="right:5.74px;top:0;font-size:10.67px;color:#000;letter-spacing:0.06px;">10,00</span></div>
<div style="right:741.64px;top:363.5px;font-size:10.67px;color:#000;letter-spacing:0.06px;">10,00</div>
<div style="left:363px;top:363.5px;font-size:10.67px;color:#000;letter-spacing:0.1px;">m2</div>
<div style="left:108px;top:377.5px;width:192px;height:16px;overflow:hidden;"><span style="left:2px;top:0;font-size:10.67px;color:#000;letter-spacing:-0.051px;">Rabat Plato; potdeksel</span></div>
<div style="right:754.2px;top:377.5px;font-size:10.67px;color:#000;">-</div>
<div style="right:667.64px;top:377.5px;font-size:10.67px;color:#000;letter-spacing:0.06px;">0,65</div>
<div style="right:621.2px;top:377.5px;font-size:10.67px;color:#000;">-</div>
<div style="right:565.7px;top:377.5px;font-size:10.67px;color:#000;">-</div>
<div style="right:494.64px;top:377.5px;font-size:10.67px;color:#000;letter-spacing:0.06px;">62,25</div>
<div style="right:446.2px;top:377.5px;font-size:10.67px;color:#000;">-</div>
<div style="right:389.2px;top:377.5px;font-size:10.67px;color:#000;">-</div>
<div style="right:336.2px;top:377.5px;font-size:10.67px;color:#000;">-</div>
<div style="right:287.2px;top:377.5px;font-size:10.67px;color:#000;">-</div>
<div style="right:233.2px;top:377.5px;font-size:10.67px;color:#000;">-</div>
<div style="right:169.7px;top:377.5px;font-size:10.67px;color:#000;">-</div>
<div style="left:363px;top:377.5px;font-size:10.67px;color:#000;letter-spacing:0.1px;">m2</div>
<div style="left:108px;top:391.5px;width:136px;height:16px;overflow:hidden;"><span style="left:2px;top:0;font-size:10.67px;color:#000;letter-spacing:-0.07px;">Rabat WRC; sponning</span></div>
<div style="left:245px;top:391.5px;width:55px;height:16px;overflow:hidden;"><span style="right:1.74px;top:0;font-size:10.67px;color:#000;letter-spacing:0.06px;">18x142</span></div>
<div style="right:741.64px;top:391.5px;font-size:10.67px;color:#000;letter-spacing:0.06px;">10,00</div>
<div style="right:667.64px;top:391.5px;font-size:10.67px;color:#000;letter-spacing:0.06px;">0,65</div>
<div style="right:608.64px;top:391.5px;font-size:10.67px;color:#000;letter-spacing:0.06px;">6,50</div>
<div style="right:553.14px;top:391.5px;font-size:10.67px;color:#000;letter-spacing:0.06px;">390</div>
<div style="right:494.64px;top:391.5px;font-size:10.67px;color:#000;letter-spacing:0.06px;">93,75</div>
<div style="right:433.64px;top:391.5px;font-size:10.67px;color:#000;letter-spacing:0.06px;">938</div>
<div style="right:389.2px;top:391.5px;font-size:10.67px;color:#000;">-</div>
<div style="right:336.2px;top:391.5px;font-size:10.67px;color:#000;">-</div>
<div style="right:287.2px;top:391.5px;font-size:10.67px;color:#000;">-</div>
<div style="right:233.2px;top:391.5px;font-size:10.67px;color:#000;">-</div>
<div style="right:157.14px;top:391.5px;font-size:10.67px;color:#000;letter-spacing:0.06px;">1.328</div>
<div style="left:363px;top:391.5px;font-size:10.67px;color:#000;letter-spacing:0.1px;">m2</div>
<div style="left:108px;top:405.5px;width:136px;height:16px;overflow:hidden;"><span style="left:2px;top:0;font-size:10.67px;color:#000;letter-spacing:0.055px;">Rabat Larix; sponning</span></div>
<div style="left:245px;top:405.5px;width:55px;height:16px;overflow:hidden;"><span style="right:1.74px;top:0;font-size:10.67px;color:#000;letter-spacing:0.06px;">18x145</span></div>
<div style="right:754.2px;top:405.5px;font-size:10.67px;color:#000;">-</div>
<div style="right:667.64px;top:405.5px;font-size:10.67px;color:#000;letter-spacing:0.06px;">0,65</div>
<div style="right:621.2px;top:405.5px;font-size:10.67px;color:#000;">-</div>
<div style="right:565.7px;top:405.5px;font-size:10.67px;color:#000;">-</div>
<div style="right:494.64px;top:405.5px;font-size:10.67px;color:#000;letter-spacing:0.06px;">30,75</div>
<div style="right:446.2px;top:405.5px;font-size:10.67px;color:#000;">-</div>
<div style="right:389.2px;top:405.5px;font-size:10.67px;color:#000;">-</div>
<div style="right:336.2px;top:405.5px;font-size:10.67px;color:#000;">-</div>
<div style="right:287.2px;top:405.5px;font-size:10.67px;color:#000;">-</div>
<div style="right:233.2px;top:405.5px;font-size:10.67px;color:#000;">-</div>
<div style="right:169.7px;top:405.5px;font-size:10.67px;color:#000;">-</div>
<div style="left:363px;top:405.5px;font-size:10.67px;color:#000;letter-spacing:0.1px;">m2</div>
<div style="left:108px;top:419.5px;width:136px;height:16px;overflow:hidden;"><span style="left:2px;top:0;font-size:10.67px;color:#000;letter-spacing:0.196px;">Rabat Accoya; (w=180mm)</span></div>
<div style="left:245px;top:419.5px;width:55px;height:16px;overflow:hidden;"><span style="right:1.74px;top:0;font-size:10.67px;color:#000;letter-spacing:0.06px;">11/22x195</span></div>
<div style="right:754.2px;top:419.5px;font-size:10.67px;color:#000;">-</div>
<div style="right:667.64px;top:419.5px;font-size:10.67px;color:#000;letter-spacing:0.06px;">0,65</div>
<div style="right:621.2px;top:419.5px;font-size:10.67px;color:#000;">-</div>
<div style="right:565.7px;top:419.5px;font-size:10.67px;color:#000;">-</div>
<div style="right:494.64px;top:419.5px;font-size:10.67px;color:#000;letter-spacing:0.06px;">93,75</div>
<div style="right:446.2px;top:419.5px;font-size:10.67px;color:#000;">-</div>
<div style="right:389.2px;top:419.5px;font-size:10.67px;color:#000;">-</div>
<div style="right:336.2px;top:419.5px;font-size:10.67px;color:#000;">-</div>
<div style="right:287.2px;top:419.5px;font-size:10.67px;color:#000;">-</div>
<div style="right:233.2px;top:419.5px;font-size:10.67px;color:#000;">-</div>
<div style="right:169.7px;top:419.5px;font-size:10.67px;color:#000;">-</div>
<div style="left:363px;top:419.5px;font-size:10.67px;color:#000;letter-spacing:0.1px;">m2</div>
<div style="left:108px;top:433.5px;width:136px;height:16px;overflow:hidden;"><span style="left:2px;top:0;font-size:10.67px;color:#000;letter-spacing:-0.002px;">Rabat Plato (w=125mm)</span></div>
<div style="left:245px;top:433.5px;width:55px;height:16px;overflow:hidden;"><span style="right:1.74px;top:0;font-size:10.67px;color:#000;letter-spacing:0.06px;">11/20x141</span></div>
<div style="right:754.2px;top:433.5px;font-size:10.67px;color:#000;">-</div>
<div style="right:667.64px;top:433.5px;font-size:10.67px;color:#000;letter-spacing:0.06px;">0,65</div>
<div style="right:621.2px;top:433.5px;font-size:10.67px;color:#000;">-</div>
<div style="right:565.7px;top:433.5px;font-size:10.67px;color:#000;">-</div>
<div style="right:494.64px;top:433.5px;font-size:10.67px;color:#000;letter-spacing:0.06px;">125,25</div>
<div style="right:446.2px;top:433.5px;font-size:10.67px;color:#000;">-</div>
<div style="right:389.2px;top:433.5px;font-size:10.67px;color:#000;">-</div>
<div style="right:336.2px;top:433.5px;font-size:10.67px;color:#000;">-</div>
<div style="right:287.2px;top:433.5px;font-size:10.67px;color:#000;">-</div>
<div style="right:233.2px;top:433.5px;font-size:10.67px;color:#000;">-</div>
<div style="right:169.7px;top:433.5px;font-size:10.67px;color:#000;">-</div>
<div style="left:363px;top:433.5px;font-size:10.67px;color:#000;letter-spacing:0.1px;">m2</div>
<div style="left:108px;top:447.5px;width:192px;height:16px;overflow:hidden;"><span style="left:2px;top:0;font-size:10.67px;color:#000;letter-spacing:0.23px;">-  regelwerk; vuren 22x75</span></div>
<div style="right:741.64px;top:447.5px;font-size:10.67px;color:#000;letter-spacing:0.06px;">16,00</div>
<div style="right:667.64px;top:447.5px;font-size:10.67px;color:#000;letter-spacing:0.06px;">0,25</div>
<div style="right:608.64px;top:447.5px;font-size:10.67px;color:#000;letter-spacing:0.06px;">4,00</div>
<div style="right:553.14px;top:447.5px;font-size:10.67px;color:#000;letter-spacing:0.06px;">240</div>
<div style="right:494.64px;top:447.5px;font-size:10.67px;color:#000;letter-spacing:0.06px;">1,58</div>
<div style="right:433.64px;top:447.5px;font-size:10.67px;color:#000;letter-spacing:0.06px;">25</div>
<div style="right:389.2px;top:447.5px;font-size:10.67px;color:#000;">-</div>
<div style="right:336.2px;top:447.5px;font-size:10.67px;color:#000;">-</div>
<div style="right:287.2px;top:447.5px;font-size:10.67px;color:#000;">-</div>
<div style="right:233.2px;top:447.5px;font-size:10.67px;color:#000;">-</div>
<div style="right:157.14px;top:447.5px;font-size:10.67px;color:#000;letter-spacing:0.06px;">265</div>
<div style="left:363px;top:447.5px;font-size:10.67px;color:#000;letter-spacing:0.1px;">m1</div>
<div style="left:108px;top:461.5px;width:192px;height:16px;overflow:hidden;"><span style="left:2px;top:0;font-size:10.67px;color:#000;letter-spacing:0.237px;">-  regelwerk; vuren verduurz. 22x50</span></div>
<div style="right:741.64px;top:461.5px;font-size:10.67px;color:#000;letter-spacing:0.06px;">16,00</div>
<div style="right:667.64px;top:461.5px;font-size:10.67px;color:#000;letter-spacing:0.06px;">0,25</div>
<div style="right:608.64px;top:461.5px;font-size:10.67px;color:#000;letter-spacing:0.06px;">4,00</div>
<div style="right:553.14px;top:461.5px;font-size:10.67px;color:#000;letter-spacing:0.06px;">240</div>
<div style="right:494.64px;top:461.5px;font-size:10.67px;color:#000;letter-spacing:0.06px;">5,80</div>
<div style="right:433.64px;top:461.5px;font-size:10.67px;color:#000;letter-spacing:0.06px;">93</div>
<div style="right:389.2px;top:461.5px;font-size:10.67px;color:#000;">-</div>
<div style="right:336.2px;top:461.5px;font-size:10.67px;color:#000;">-</div>
<div style="right:287.2px;top:461.5px;font-size:10.67px;color:#000;">-</div>
<div style="right:233.2px;top:461.5px;font-size:10.67px;color:#000;">-</div>
<div style="right:157.14px;top:461.5px;font-size:10.67px;color:#000;letter-spacing:0.06px;">333</div>
<div style="left:363px;top:461.5px;font-size:10.67px;color:#000;letter-spacing:0.1px;">m1</div>
<div style="left:108px;top:475.5px;width:136px;height:16px;overflow:hidden;"><span style="left:2px;top:0;font-size:10.67px;color:#000;letter-spacing:0.22px;">-  brandwerend klasse B</span></div>
<div style="left:245px;top:475.5px;width:55px;height:16px;overflow:hidden;"><span style="right:1.74px;top:0;font-size:10.67px;color:#000;letter-spacing:0.06px;">toeslag</span></div>
<div style="right:741.64px;top:475.5px;font-size:10.67px;color:#000;letter-spacing:0.06px;">10,00</div>
<div style="right:680.2px;top:475.5px;font-size:10.67px;color:#000;">-</div>
<div style="right:621.2px;top:475.5px;font-size:10.67px;color:#000;">-</div>
<div style="right:565.7px;top:475.5px;font-size:10.67px;color:#000;">-</div>
<div style="right:507.2px;top:475.5px;font-size:10.67px;color:#000;">-</div>
<div style="right:446.2px;top:475.5px;font-size:10.67px;color:#000;">-</div>
<div style="right:376.64px;top:475.5px;font-size:10.67px;color:#000;letter-spacing:0.06px;">15,00</div>
<div style="right:323.64px;top:475.5px;font-size:10.67px;color:#000;letter-spacing:0.06px;">150</div>
<div style="right:287.2px;top:475.5px;font-size:10.67px;color:#000;">-</div>
<div style="right:233.2px;top:475.5px;font-size:10.67px;color:#000;">-</div>
<div style="right:157.14px;top:475.5px;font-size:10.67px;color:#000;letter-spacing:0.06px;">150</div>
<div style="left:363px;top:475.5px;font-size:10.67px;color:#000;letter-spacing:0.1px;">m2</div>
<div style="left:108px;top:489.5px;width:192px;height:16px;overflow:hidden;"><span style="left:2px;top:0;font-size:10.67px;color:#000;letter-spacing:0.105px;">-  bevestig.middelen, L-afst.houders  e.d.</span></div>
<div style="right:741.64px;top:489.5px;font-size:10.67px;color:#000;letter-spacing:0.06px;">10,00</div>
<div style="right:667.64px;top:489.5px;font-size:10.67px;color:#000;letter-spacing:0.06px;">0,05</div>
<div style="right:608.64px;top:489.5px;font-size:10.67px;color:#000;letter-spacing:0.06px;">0,50</div>
<div style="right:553.14px;top:489.5px;font-size:10.67px;color:#000;letter-spacing:0.06px;">30</div>
<div style="right:494.64px;top:489.5px;font-size:10.67px;color:#000;letter-spacing:0.06px;">8,40</div>
<div style="right:433.64px;top:489.5px;font-size:10.67px;color:#000;letter-spacing:0.06px;">84</div>
<div style="right:389.2px;top:489.5px;font-size:10.67px;color:#000;">-</div>
<div style="right:336.2px;top:489.5px;font-size:10.67px;color:#000;">-</div>
<div style="right:287.2px;top:489.5px;font-size:10.67px;color:#000;">-</div>
<div style="right:233.2px;top:489.5px;font-size:10.67px;color:#000;">-</div>
<div style="right:157.14px;top:489.5px;font-size:10.67px;color:#000;letter-spacing:0.06px;">114</div>
<div style="left:363px;top:489.5px;font-size:10.67px;color:#000;letter-spacing:0.1px;">m2</div>
<div style="left:108px;top:503.5px;width:136px;height:16px;overflow:hidden;"><span style="left:2px;top:0;font-size:10.67px;color:#000;letter-spacing:-0.055px;">-  isolatie; Rc=4,7 Multimax 40</span></div>
<div style="left:245px;top:503.5px;width:55px;height:16px;overflow:hidden;"><span style="right:1.74px;top:0;font-size:10.67px;color:#000;letter-spacing:0.06px;">121mm</span></div>
<div style="right:741.64px;top:503.5px;font-size:10.67px;color:#000;letter-spacing:0.06px;">10,00</div>
<div style="right:667.64px;top:503.5px;font-size:10.67px;color:#000;letter-spacing:0.06px;">0,15</div>
<div style="right:608.64px;top:503.5px;font-size:10.67px;color:#000;letter-spacing:0.06px;">1,50</div>
<div style="right:553.14px;top:503.5px;font-size:10.67px;color:#000;letter-spacing:0.06px;">90</div>
<div style="right:494.64px;top:503.5px;font-size:10.67px;color:#000;letter-spacing:0.06px;">34,58</div>
<div style="right:433.64px;top:503.5px;font-size:10.67px;color:#000;letter-spacing:0.06px;">346</div>
<div style="right:389.2px;top:503.5px;font-size:10.67px;color:#000;">-</div>
<div style="right:336.2px;top:503.5px;font-size:10.67px;color:#000;">-</div>
<div style="right:287.2px;top:503.5px;font-size:10.67px;color:#000;">-</div>
<div style="right:233.2px;top:503.5px;font-size:10.67px;color:#000;">-</div>
<div style="right:157.14px;top:503.5px;font-size:10.67px;color:#000;letter-spacing:0.06px;">436</div>
<div style="left:363px;top:503.5px;font-size:10.67px;color:#000;letter-spacing:0.1px;">m2</div>
<div style="left:108px;top:517.5px;width:136px;height:16px;overflow:hidden;"><span style="left:2px;top:0;font-size:10.67px;color:#000;letter-spacing:0.023px;">-  isolatie; Rc=6,3 toeslag</span></div>
<div style="left:245px;top:517.5px;width:55px;height:16px;overflow:hidden;"><span style="right:1.74px;top:0;font-size:10.67px;color:#000;letter-spacing:0.06px;">20mm</span></div>
<div style="right:667.64px;top:517.5px;font-size:10.67px;color:#000;letter-spacing:0.06px;">0,05</div>
<div style="right:621.2px;top:517.5px;font-size:10.67px;color:#000;">-</div>
<div style="right:565.7px;top:517.5px;font-size:10.67px;color:#000;">-</div>
<div style="right:494.64px;top:517.5px;font-size:10.67px;color:#000;letter-spacing:0.06px;">12,00</div>
<div style="right:446.2px;top:517.5px;font-size:10.67px;color:#000;">-</div>
<div style="right:389.2px;top:517.5px;font-size:10.67px;color:#000;">-</div>
<div style="right:336.2px;top:517.5px;font-size:10.67px;color:#000;">-</div>
<div style="right:287.2px;top:517.5px;font-size:10.67px;color:#000;">-</div>
<div style="right:233.2px;top:517.5px;font-size:10.67px;color:#000;">-</div>
<div style="right:169.7px;top:517.5px;font-size:10.67px;color:#000;">-</div>
<div style="left:363px;top:517.5px;font-size:10.67px;color:#000;letter-spacing:0.1px;">m2</div>
<div style="left:108px;top:531.5px;width:136px;height:16px;overflow:hidden;"><span style="left:2px;top:0;font-size:10.67px;color:#000;letter-spacing:0.047px;">Slimfort isol. syst. Rc=5,0.</span></div>
<div style="left:245px;top:531.5px;width:55px;height:16px;overflow:hidden;"><span style="right:1.74px;top:0;font-size:10.67px;color:#000;letter-spacing:0.06px;">181mm</span></div>
<div style="right:754.2px;top:531.5px;font-size:10.67px;color:#000;">-</div>
<div style="right:667.64px;top:531.5px;font-size:10.67px;color:#000;letter-spacing:0.06px;">0,15</div>
<div style="right:621.2px;top:531.5px;font-size:10.67px;color:#000;">-</div>
<div style="right:565.7px;top:531.5px;font-size:10.67px;color:#000;">-</div>
<div style="right:494.64px;top:531.5px;font-size:10.67px;color:#000;letter-spacing:0.06px;">64,10</div>
<div style="right:446.2px;top:531.5px;font-size:10.67px;color:#000;">-</div>
<div style="right:389.2px;top:531.5px;font-size:10.67px;color:#000;">-</div>
<div style="right:336.2px;top:531.5px;font-size:10.67px;color:#000;">-</div>
<div style="right:287.2px;top:531.5px;font-size:10.67px;color:#000;">-</div>
<div style="right:233.2px;top:531.5px;font-size:10.67px;color:#000;">-</div>
<div style="right:169.7px;top:531.5px;font-size:10.67px;color:#000;">-</div>
<div style="left:363px;top:531.5px;font-size:10.67px;color:#000;letter-spacing:0.1px;">m2</div>
<div style="left:108px;top:545.5px;width:136px;height:16px;overflow:hidden;"><span style="left:2px;top:0;font-size:10.67px;color:#000;letter-spacing:0.047px;">Slimfort isol. syst. Rc=3,5.</span></div>
<div style="left:245px;top:545.5px;width:55px;height:16px;overflow:hidden;"><span style="right:1.74px;top:0;font-size:10.67px;color:#000;letter-spacing:0.06px;">131mm</span></div>
<div style="right:754.2px;top:545.5px;font-size:10.67px;color:#000;">-</div>
<div style="right:667.64px;top:545.5px;font-size:10.67px;color:#000;letter-spacing:0.06px;">0,15</div>
<div style="right:621.2px;top:545.5px;font-size:10.67px;color:#000;">-</div>
<div style="right:565.7px;top:545.5px;font-size:10.67px;color:#000;">-</div>
<div style="right:494.64px;top:545.5px;font-size:10.67px;color:#000;letter-spacing:0.06px;">61,90</div>
<div style="right:446.2px;top:545.5px;font-size:10.67px;color:#000;">-</div>
<div style="right:389.2px;top:545.5px;font-size:10.67px;color:#000;">-</div>
<div style="right:336.2px;top:545.5px;font-size:10.67px;color:#000;">-</div>
<div style="right:287.2px;top:545.5px;font-size:10.67px;color:#000;">-</div>
<div style="right:233.2px;top:545.5px;font-size:10.67px;color:#000;">-</div>
<div style="right:169.7px;top:545.5px;font-size:10.67px;color:#000;">-</div>
<div style="left:363px;top:545.5px;font-size:10.67px;color:#000;letter-spacing:0.1px;">m2</div>
<div style="left:108px;top:559.5px;width:136px;height:16px;overflow:hidden;"><span style="left:2px;top:0;font-size:10.67px;color:#000;letter-spacing:0.047px;">Slimfort isol. syst. Rc=6,3.</span></div>
<div style="left:245px;top:559.5px;width:55px;height:16px;overflow:hidden;"><span style="right:1.74px;top:0;font-size:10.67px;color:#000;letter-spacing:0.06px;">tslg op 3,5</span></div>
<div style="right:754.2px;top:559.5px;font-size:10.67px;color:#000;">-</div>
<div style="right:667.64px;top:559.5px;font-size:10.67px;color:#000;letter-spacing:0.06px;">0,10</div>
<div style="right:621.2px;top:559.5px;font-size:10.67px;color:#000;">-</div>
<div style="right:565.7px;top:559.5px;font-size:10.67px;color:#000;">-</div>
<div style="right:494.64px;top:559.5px;font-size:10.67px;color:#000;letter-spacing:0.06px;">23,45</div>
<div style="right:446.2px;top:559.5px;font-size:10.67px;color:#000;">-</div>
<div style="right:389.2px;top:559.5px;font-size:10.67px;color:#000;">-</div>
<div style="right:336.2px;top:559.5px;font-size:10.67px;color:#000;">-</div>
<div style="right:287.2px;top:559.5px;font-size:10.67px;color:#000;">-</div>
<div style="right:233.2px;top:559.5px;font-size:10.67px;color:#000;">-</div>
<div style="right:169.7px;top:559.5px;font-size:10.67px;color:#000;">-</div>
<div style="left:363px;top:559.5px;font-size:10.67px;color:#000;letter-spacing:0.1px;">m2</div>
<div style="left:108px;top:573.5px;width:192px;height:16px;overflow:hidden;"><span style="left:2px;top:0;font-size:10.67px;color:#000;letter-spacing:0.089px;">-  toebehoren, folies e.d.</span></div>
<div style="right:741.64px;top:573.5px;font-size:10.67px;color:#000;letter-spacing:0.06px;">10,00</div>
<div style="right:667.64px;top:573.5px;font-size:10.67px;color:#000;letter-spacing:0.06px;">0,05</div>
<div style="right:608.64px;top:573.5px;font-size:10.67px;color:#000;letter-spacing:0.06px;">0,50</div>
<div style="right:553.14px;top:573.5px;font-size:10.67px;color:#000;letter-spacing:0.06px;">30</div>
<div style="right:494.64px;top:573.5px;font-size:10.67px;color:#000;letter-spacing:0.06px;">12,47</div>
<div style="right:433.64px;top:573.5px;font-size:10.67px;color:#000;letter-spacing:0.06px;">125</div>
<div style="right:389.2px;top:573.5px;font-size:10.67px;color:#000;">-</div>
<div style="right:336.2px;top:573.5px;font-size:10.67px;color:#000;">-</div>
<div style="right:287.2px;top:573.5px;font-size:10.67px;color:#000;">-</div>
<div style="right:233.2px;top:573.5px;font-size:10.67px;color:#000;">-</div>
<div style="right:157.14px;top:573.5px;font-size:10.67px;color:#000;letter-spacing:0.06px;">155</div>
<div style="left:363px;top:573.5px;font-size:10.67px;color:#000;letter-spacing:0.1px;">m2</div>
<div style="left:108px;top:587.5px;width:192px;height:16px;overflow:hidden;"><span style="left:2px;top:0;font-size:10.67px;color:#000;letter-spacing:0.13px;">Kraan-/steiger</span></div>
<div style="right:741.64px;top:587.5px;font-size:10.67px;color:#000;letter-spacing:0.06px;">1,00</div>
<div style="right:667.64px;top:587.5px;font-size:10.67px;color:#000;letter-spacing:0.06px;">0,05</div>
<div style="right:608.64px;top:587.5px;font-size:10.67px;color:#000;letter-spacing:0.06px;">0,05</div>
<div style="right:553.14px;top:587.5px;font-size:10.67px;color:#000;letter-spacing:0.06px;">3</div>
<div style="right:507.2px;top:587.5px;font-size:10.67px;color:#000;">-</div>
<div style="right:446.2px;top:587.5px;font-size:10.67px;color:#000;">-</div>
<div style="right:376.64px;top:587.5px;font-size:10.67px;color:#000;letter-spacing:0.06px;">15,00</div>
<div style="right:323.64px;top:587.5px;font-size:10.67px;color:#000;letter-spacing:0.06px;">15</div>
<div style="right:287.2px;top:587.5px;font-size:10.67px;color:#000;">-</div>
<div style="right:233.2px;top:587.5px;font-size:10.67px;color:#000;">-</div>
<div style="right:157.14px;top:587.5px;font-size:10.67px;color:#000;letter-spacing:0.06px;">18</div>
<div style="left:363px;top:587.5px;font-size:10.67px;color:#000;letter-spacing:0.1px;">gvg</div>
<div style="left:68px;top:221.6px;font-size:10.67px;color:#000;letter-spacing:-0.05px;">24.32</div>
<div style="left:110px;top:222.8px;font-size:10.25px;color:#000;font-weight:bold;letter-spacing:0.02px;">BALKLAGEN + BESCHOT</div>
<div style="right:91.4px;top:227.5px;font-size:10.67px;color:#000;font-weight:bold;">2.044</div>
<div style="left:68px;top:343.6px;font-size:10.67px;color:#000;letter-spacing:-0.05px;">24.41</div>
<div style="left:110px;top:344.8px;font-size:10.25px;color:#000;font-weight:bold;letter-spacing:-0.23px;">GEVELBEKLEDINGEN</div>
<div style="right:91.4px;top:363.5px;font-size:10.67px;color:#000;font-weight:bold;">2.798</div>
<div style="left:68px;top:148.7px;font-size:10.25px;color:#000;font-weight:bold;">23</div>
<div style="left:110px;top:148.7px;font-size:10.25px;color:#000;font-weight:bold;">VOORAF VERVAARDIGDE STEENACHTIGE ELEMENTEN</div>
<div style="right:103px;top:148.7px;font-size:10.25px;color:#000;font-weight:bold;">-</div>
<div style="left:1016.5px;top:148.7px;font-size:10.25px;color:#000;font-weight:bold;">€</div>
<div style="right:8.99px;top:148.7px;font-size:10.25px;color:#000;font-weight:bold;letter-spacing:0.31px;">35.877</div>
<div style="left:68px;top:198.8px;font-size:10.25px;color:#000;font-weight:bold;">24</div>
<div style="left:110px;top:198.8px;font-size:10.25px;color:#000;font-weight:bold;letter-spacing:0.033px;">RUWBOUWTIMMERWERK</div>
<div style="right:103px;top:198.8px;font-size:10.25px;color:#000;font-weight:bold;">-</div>
<div style="left:1016.5px;top:198.8px;font-size:10.25px;color:#000;font-weight:bold;">€</div>
<div style="right:8.99px;top:198.8px;font-size:10.25px;color:#000;font-weight:bold;letter-spacing:0.31px;">66.158</div>
<div style="right:169px;top:130px;font-size:12.5px;color:#ff2a1a;font-weight:bold;">-</div>
<div style="right:169px;top:180px;font-size:12.5px;color:#ff2a1a;font-weight:bold;">-</div>
<div style="left:66px;top:22px;width:41.5px;height:18px;overflow:hidden;"><span style="left:2.2px;top:0;font-size:12px;color:#000;font-weight:bold;letter-spacing:-0.319px;">proj.nr.</span></div>
<div style="left:110px;top:22px;font-size:12px;color:#0000ff;font-weight:bold;">PQ-raming</div>
<div style="left:66px;top:41px;width:41px;height:18px;overflow:hidden;"><span style="left:2px;top:0;font-size:12px;color:#000;font-weight:bold;">project</span></div>
<div style="left:110px;top:41px;font-size:12px;color:#0000ff;font-weight:bold;letter-spacing:0.025px;">Rotterdam; nieuwbouw 251216</div>
<div style="left:396.6px;top:41px;font-size:13.6px;color:#000;font-weight:bold;letter-spacing:-0.329px;">TO/B Begroting</div>
<div style="right:86.923px;top:23px;font-size:10.8px;color:#000;letter-spacing:0.077px;">Opdrachtgever: Jansen B.V.</div>
<div style="right:8.444px;top:23px;font-size:10.67px;color:#000;letter-spacing:-0.244px;">datum:</div>
<div style="right:86.922px;top:42px;font-size:10.8px;color:#000;letter-spacing:0.078px;">Ontwerp: Portqube</div>
<div style="right:4.88px;top:41px;font-size:12.3px;color:#000;font-weight:bold;letter-spacing:0.12px;">01-12-2025</div>
<div style="left:68px;top:76px;font-size:11.5px;color:#000;font-weight:bold;">Hd.</div>
<div style="left:92px;top:76px;width:15px;height:17px;overflow:hidden;"><span style="left:3px;top:0;font-size:11.5px;color:#000;font-weight:bold;">EL</span></div>
<div style="left:114px;top:76px;font-size:11.5px;color:#000;font-weight:bold;letter-spacing:0.03px;">omschrijving</div>
<div style="left:307.2px;top:76px;font-size:11.5px;color:#000;font-weight:bold;letter-spacing:-0.014px;">hoev.hd</div>
<div style="left:362px;top:76px;font-size:11.5px;color:#000;font-weight:bold;letter-spacing:0.392px;">eh.</div>
<div style="left:389px;top:76px;width:44px;height:17px;overflow:hidden;"><span style="left:6.8px;top:0;font-size:11.5px;color:#000;font-weight:bold;letter-spacing:0.398px;">uren/eh</span></div>
<div style="left:263.386px;width:400px;text-align:center;top:76px;font-size:11.5px;color:#000;font-weight:bold;letter-spacing:0.171px;">uren_tot</div>
<div style="left:494px;top:76px;width:54.5px;height:17px;overflow:hidden;"><span style="left:5.8px;top:0;font-size:11.5px;color:#000;font-weight:bold;letter-spacing:0.138px;">kost_arb</span></div>
<div style="left:378.324px;width:400px;text-align:center;top:76px;font-size:11.5px;color:#000;font-weight:bold;letter-spacing:0.049px;">mat./eh.</div>
<div style="left:437.731px;width:400px;text-align:center;top:76px;font-size:11.5px;color:#000;font-weight:bold;letter-spacing:0.062px;">mat.tot</div>
<div style="left:496.583px;width:400px;text-align:center;top:76px;font-size:11px;color:#000;font-weight:bold;letter-spacing:-0.034px;">O.A./eh</div>
<div style="left:550.981px;width:400px;text-align:center;top:76px;font-size:11px;color:#000;font-weight:bold;letter-spacing:-0.037px;">O.A.</div>
<div style="left:602.462px;width:400px;text-align:center;top:76px;font-size:11px;color:#000;font-weight:bold;letter-spacing:-0.077px;">STP/eh</div>
<div style="left:655.321px;width:400px;text-align:center;top:76px;font-size:10.6px;color:#000;font-weight:bold;letter-spacing:-0.158px;">STP</div>
<div style="left:713.26px;width:400px;text-align:center;top:76px;font-size:11.5px;color:#000;font-weight:bold;letter-spacing:0.12px;">pr. /eenh.</div>
<div style="left:777.867px;width:400px;text-align:center;top:76px;font-size:11.5px;color:#000;font-weight:bold;letter-spacing:0.134px;">pr. /elem.</div>
<div style="left:1018px;top:76px;font-size:10.6px;color:#000;font-weight:bold;letter-spacing:-0.066px;">SUB.totaal</div>
<div style="left:0px;top:0px;width:1095px;height:18px;background:#2e2e2e;"></div>
<div style="left:0px;top:18px;width:1095px;height:1px;background:#555555;"></div>
<div style="left:66px;top:19px;width:1029px;height:1px;background:#d4d4d4;opacity:.8;"></div>
<div style="left:300.5px;top:4px;width:59px;height:13.5px;background:#6a6a6a;"></div>
<div style="left:300.5px;top:17px;width:59px;height:2px;background:#1f8a4c;"></div>
<div style="left:300.5px;top:19px;width:59px;height:1px;background:#1f8a4c;opacity:.45;"></div>
<div style="left:92px;top:4px;width:1px;height:15px;background:#b4b4b4;"></div>
<div style="left:107px;top:4px;width:1px;height:15px;background:#b4b4b4;"></div>
<div style="left:130px;top:4px;width:1px;height:15px;background:#b4b4b4;"></div>
<div style="left:244px;top:4px;width:1px;height:15px;background:#b4b4b4;"></div>
<div style="left:359px;top:4px;width:1px;height:15px;background:#b4b4b4;"></div>
<div style="left:389px;top:4px;width:1px;height:15px;background:#b4b4b4;"></div>
<div style="left:433px;top:4px;width:1px;height:15px;background:#b4b4b4;"></div>
<div style="left:493px;top:4px;width:1px;height:15px;background:#b4b4b4;"></div>
<div style="left:548px;top:4px;width:1px;height:15px;background:#b4b4b4;"></div>
<div style="left:606px;top:4px;width:1px;height:15px;background:#b4b4b4;"></div>
<div style="left:667px;top:4px;width:1px;height:15px;background:#b4b4b4;"></div>
<div style="left:724px;top:4px;width:1px;height:15px;background:#b4b4b4;"></div>
<div style="left:777px;top:4px;width:1px;height:15px;background:#b4b4b4;"></div>
<div style="left:826px;top:4px;width:1px;height:15px;background:#b4b4b4;"></div>
<div style="left:881px;top:4px;width:1px;height:15px;background:#b4b4b4;"></div>
<div style="left:944px;top:4px;width:1px;height:15px;background:#b4b4b4;"></div>
<div style="left:1010px;top:4px;width:1px;height:15px;background:#b4b4b4;"></div>
<div style="left:1092px;top:4px;width:1px;height:15px;background:#b4b4b4;"></div>
<div style="left:65px;top:4px;width:1px;height:15px;background:#b4b4b4;"></div>
<div style="left:-121px;width:400px;text-align:center;top:5.6px;font-size:10.8px;color:#fff;-webkit-text-stroke:0.15px #fff;">A</div>
<div style="left:-100.5px;width:400px;text-align:center;top:5.6px;font-size:10.8px;color:#fff;-webkit-text-stroke:0.15px #fff;">B</div>
<div style="left:-81.5px;width:400px;text-align:center;top:5.6px;font-size:10.8px;color:#fff;-webkit-text-stroke:0.15px #fff;">C</div>
<div style="left:-13px;width:400px;text-align:center;top:5.6px;font-size:10.8px;color:#fff;-webkit-text-stroke:0.15px #fff;">D</div>
<div style="left:72px;width:400px;text-align:center;top:5.6px;font-size:10.8px;color:#fff;-webkit-text-stroke:0.15px #fff;">E</div>
<div style="left:129.75px;width:400px;text-align:center;top:5.6px;font-size:10.8px;color:#fff;-webkit-text-stroke:0.15px #fff;">F</div>
<div style="left:174.25px;width:400px;text-align:center;top:5.6px;font-size:10.8px;color:#fff;-webkit-text-stroke:0.15px #fff;">G</div>
<div style="left:211px;width:400px;text-align:center;top:5.6px;font-size:10.8px;color:#fff;-webkit-text-stroke:0.15px #fff;">H</div>
<div style="left:263.25px;width:400px;text-align:center;top:5.6px;font-size:10.8px;color:#fff;-webkit-text-stroke:0.15px #fff;">I</div>
<div style="left:321px;width:400px;text-align:center;top:5.6px;font-size:10.8px;color:#fff;-webkit-text-stroke:0.15px #fff;">J</div>
<div style="left:377.25px;width:400px;text-align:center;top:5.6px;font-size:10.8px;color:#fff;-webkit-text-stroke:0.15px #fff;">K</div>
<div style="left:436.75px;width:400px;text-align:center;top:5.6px;font-size:10.8px;color:#fff;-webkit-text-stroke:0.15px #fff;">L</div>
<div style="left:496px;width:400px;text-align:center;top:5.6px;font-size:10.8px;color:#fff;-webkit-text-stroke:0.15px #fff;">M</div>
<div style="left:551px;width:400px;text-align:center;top:5.6px;font-size:10.8px;color:#fff;-webkit-text-stroke:0.15px #fff;">N</div>
<div style="left:602px;width:400px;text-align:center;top:5.6px;font-size:10.8px;color:#fff;-webkit-text-stroke:0.15px #fff;">O</div>
<div style="left:653.75px;width:400px;text-align:center;top:5.6px;font-size:10.8px;color:#fff;-webkit-text-stroke:0.15px #fff;">P</div>
<div style="left:712.75px;width:400px;text-align:center;top:5.6px;font-size:10.8px;color:#fff;-webkit-text-stroke:0.15px #fff;">Q</div>
<div style="left:777.5px;width:400px;text-align:center;top:5.6px;font-size:10.8px;color:#fff;-webkit-text-stroke:0.15px #fff;">R</div>
<div style="left:851.5px;width:400px;text-align:center;top:5.6px;font-size:10.8px;color:#fff;-webkit-text-stroke:0.15px #fff;">S</div>
<svg style="left:55px;top:8.6px" width="8" height="8"><path d="M7 0V7H0Z" fill="#e6e6e6"/></svg>
<div style="left:0px;top:4px;width:43px;height:596px;background:#6a6a6a;"></div>
<div style="left:2px;top:5.5px;width:11px;height:11px;background:#e4e4e4;"></div>
<div style="left:-192.5px;width:400px;text-align:center;top:5px;font-size:10.5px;color:#5a5a5a;">1</div>
<div style="left:15px;top:5.5px;width:11px;height:11px;background:#e4e4e4;"></div>
<div style="left:-179.5px;width:400px;text-align:center;top:5px;font-size:10.5px;color:#5a5a5a;">2</div>
<div style="left:28px;top:5.5px;width:11px;height:11px;background:#e4e4e4;"></div>
<div style="left:-166.5px;width:400px;text-align:center;top:5px;font-size:10.5px;color:#5a5a5a;">3</div>
<div style="left:43px;top:19px;width:22px;height:596px;background:#2e2e2e;"></div>
<div style="left:65px;top:19px;width:1px;height:596px;background:#9a9a9a;"></div>
<div style="left:43px;top:37px;width:22px;height:2px;background:#5e5e5e;"></div>
<div style="left:43px;top:57px;width:22px;height:2px;background:#5e5e5e;"></div>
<div style="left:43px;top:74px;width:22px;height:1px;background:#858585;"></div>
<div style="left:43px;top:91px;width:22px;height:2px;background:#5e5e5e;"></div>
<div style="left:43px;top:116px;width:22px;height:1px;background:#858585;"></div>
<div style="left:43px;top:141px;width:22px;height:1px;background:#858585;"></div>
<div style="left:43px;top:166px;width:22px;height:1px;background:#858585;"></div>
<div style="left:43px;top:191px;width:22px;height:1px;background:#858585;"></div>
<div style="left:43px;top:215px;width:22px;height:2px;background:#5e5e5e;"></div>
<div style="left:43px;top:239px;width:22px;height:2px;background:#5e5e5e;"></div>
<div style="left:43px;top:253px;width:22px;height:2px;background:#5e5e5e;"></div>
<div style="left:43px;top:267px;width:22px;height:2px;background:#5e5e5e;"></div>
<div style="left:43px;top:281px;width:22px;height:2px;background:#5e5e5e;"></div>
<div style="left:43px;top:295px;width:22px;height:2px;background:#5e5e5e;"></div>
<div style="left:43px;top:309px;width:22px;height:2px;background:#5e5e5e;"></div>
<div style="left:43px;top:323px;width:22px;height:2px;background:#5e5e5e;"></div>
<div style="left:43px;top:337px;width:22px;height:2px;background:#5e5e5e;"></div>
<div style="left:43px;top:361px;width:22px;height:2px;background:#5e5e5e;"></div>
<div style="left:43px;top:375px;width:22px;height:2px;background:#5e5e5e;"></div>
<div style="left:43px;top:389px;width:22px;height:2px;background:#5e5e5e;"></div>
<div style="left:43px;top:403px;width:22px;height:2px;background:#5e5e5e;"></div>
<div style="left:43px;top:417px;width:22px;height:2px;background:#5e5e5e;"></div>
<div style="left:43px;top:431px;width:22px;height:2px;background:#5e5e5e;"></div>
<div style="left:43px;top:445px;width:22px;height:2px;background:#5e5e5e;"></div>
<div style="left:43px;top:459px;width:22px;height:2px;background:#5e5e5e;"></div>
<div style="left:43px;top:473px;width:22px;height:2px;background:#5e5e5e;"></div>
<div style="left:43px;top:487px;width:22px;height:2px;background:#5e5e5e;"></div>
<div style="left:43px;top:501px;width:22px;height:2px;background:#5e5e5e;"></div>
<div style="left:43px;top:515px;width:22px;height:2px;background:#5e5e5e;"></div>
<div style="left:43px;top:529px;width:22px;height:2px;background:#5e5e5e;"></div>
<div style="left:43px;top:543px;width:22px;height:2px;background:#5e5e5e;"></div>
<div style="left:43px;top:557px;width:22px;height:2px;background:#5e5e5e;"></div>
<div style="left:43px;top:571px;width:22px;height:2px;background:#5e5e5e;"></div>
<div style="left:43px;top:585px;width:22px;height:2px;background:#5e5e5e;"></div>
<div style="left:43px;top:599px;width:22px;height:2px;background:#5e5e5e;"></div>
<div style="left:-146px;width:400px;text-align:center;top:25.6px;font-size:11px;color:#fff;-webkit-text-stroke:0.15px #fff;">4</div>
<div style="left:-146px;width:400px;text-align:center;top:43.6px;font-size:11px;color:#fff;-webkit-text-stroke:0.15px #fff;">5</div>
<div style="left:-146px;width:400px;text-align:center;top:61.6px;font-size:11px;color:#fff;-webkit-text-stroke:0.15px #fff;">6</div>
<div style="left:-146px;width:400px;text-align:center;top:77.6px;font-size:11px;color:#fff;-webkit-text-stroke:0.15px #fff;">7</div>
<div style="left:-146px;width:400px;text-align:center;top:95.6px;font-size:11px;color:#fff;-webkit-text-stroke:0.15px #fff;">9</div>
<div style="left:43px;top:109px;width:22px;height:7px;background:#2e2e2e;overflow:hidden"><div style="left:0;width:22px;text-align:center;top:-4px;font-size:11px;color:#fff;-webkit-text-stroke:0.15px #fff;">281</div></div>
<div style="left:-146px;width:400px;text-align:center;top:129.6px;font-size:11px;color:#fff;-webkit-text-stroke:0.15px #fff;">319</div>
<div style="left:-146px;width:400px;text-align:center;top:153.4px;font-size:11px;color:#fff;-webkit-text-stroke:0.15px #fff;">320</div>
<div style="left:46px;top:164px;width:19px;height:1px;background:#cfcfcf;"></div>
<div style="left:-146px;width:400px;text-align:center;top:179.6px;font-size:11px;color:#fff;-webkit-text-stroke:0.15px #fff;">347</div>
<div style="left:-146px;width:400px;text-align:center;top:203.4px;font-size:11px;color:#fff;-webkit-text-stroke:0.15px #fff;">348</div>
<div style="left:46px;top:214px;width:19px;height:1px;background:#cfcfcf;"></div>
<div style="left:-146px;width:400px;text-align:center;top:227.6px;font-size:11px;color:#fff;-webkit-text-stroke:0.15px #fff;">349</div>
<div style="left:-146px;width:400px;text-align:center;top:241.6px;font-size:11px;color:#fff;-webkit-text-stroke:0.15px #fff;">350</div>
<div style="left:-146px;width:400px;text-align:center;top:255.6px;font-size:11px;color:#fff;-webkit-text-stroke:0.15px #fff;">351</div>
<div style="left:-146px;width:400px;text-align:center;top:269.6px;font-size:11px;color:#fff;-webkit-text-stroke:0.15px #fff;">352</div>
<div style="left:-146px;width:400px;text-align:center;top:283.6px;font-size:11px;color:#fff;-webkit-text-stroke:0.15px #fff;">353</div>
<div style="left:-146px;width:400px;text-align:center;top:297.6px;font-size:11px;color:#fff;-webkit-text-stroke:0.15px #fff;">354</div>
<div style="left:-146px;width:400px;text-align:center;top:311.6px;font-size:11px;color:#fff;-webkit-text-stroke:0.15px #fff;">355</div>
<div style="left:-146px;width:400px;text-align:center;top:325.6px;font-size:11px;color:#fff;-webkit-text-stroke:0.15px #fff;">356</div>
<div style="left:-146px;width:400px;text-align:center;top:349.6px;font-size:11px;color:#fff;-webkit-text-stroke:0.15px #fff;">357</div>
<div style="left:-146px;width:400px;text-align:center;top:363.6px;font-size:11px;color:#fff;-webkit-text-stroke:0.15px #fff;">358</div>
<div style="left:-146px;width:400px;text-align:center;top:377.6px;font-size:11px;color:#fff;-webkit-text-stroke:0.15px #fff;">359</div>
<div style="left:-146px;width:400px;text-align:center;top:391.6px;font-size:11px;color:#fff;-webkit-text-stroke:0.15px #fff;">360</div>
<div style="left:-146px;width:400px;text-align:center;top:405.6px;font-size:11px;color:#fff;-webkit-text-stroke:0.15px #fff;">361</div>
<div style="left:-146px;width:400px;text-align:center;top:419.6px;font-size:11px;color:#fff;-webkit-text-stroke:0.15px #fff;">362</div>
<div style="left:-146px;width:400px;text-align:center;top:433.6px;font-size:11px;color:#fff;-webkit-text-stroke:0.15px #fff;">363</div>
<div style="left:-146px;width:400px;text-align:center;top:447.6px;font-size:11px;color:#fff;-webkit-text-stroke:0.15px #fff;">364</div>
<div style="left:-146px;width:400px;text-align:center;top:461.6px;font-size:11px;color:#fff;-webkit-text-stroke:0.15px #fff;">365</div>
<div style="left:-146px;width:400px;text-align:center;top:475.6px;font-size:11px;color:#fff;-webkit-text-stroke:0.15px #fff;">366</div>
<div style="left:-146px;width:400px;text-align:center;top:489.6px;font-size:11px;color:#fff;-webkit-text-stroke:0.15px #fff;">367</div>
<div style="left:-146px;width:400px;text-align:center;top:503.6px;font-size:11px;color:#fff;-webkit-text-stroke:0.15px #fff;">368</div>
<div style="left:-146px;width:400px;text-align:center;top:517.6px;font-size:11px;color:#fff;-webkit-text-stroke:0.15px #fff;">369</div>
<div style="left:-146px;width:400px;text-align:center;top:531.6px;font-size:11px;color:#fff;-webkit-text-stroke:0.15px #fff;">370</div>
<div style="left:-146px;width:400px;text-align:center;top:545.6px;font-size:11px;color:#fff;-webkit-text-stroke:0.15px #fff;">371</div>
<div style="left:-146px;width:400px;text-align:center;top:559.6px;font-size:11px;color:#fff;-webkit-text-stroke:0.15px #fff;">372</div>
<div style="left:-146px;width:400px;text-align:center;top:573.6px;font-size:11px;color:#fff;-webkit-text-stroke:0.15px #fff;">373</div>
<div style="left:-146px;width:400px;text-align:center;top:587.6px;font-size:11px;color:#fff;-webkit-text-stroke:0.15px #fff;">374</div>
<div style="left:0px;top:108px;width:66px;height:1px;background:#bdbdbd;"></div>
<div style="left:66px;top:108px;width:1029px;height:1px;background:#a8a8a8;"></div>
<div style="left:2px;top:108px;width:11px;height:2px;background:#c8c8c8;"></div>
<div style="left:2px;top:148.5px;width:11px;height:11px;background:#e6e6e6;box-shadow:0 0 0 0.5px #8a8a8a;"></div>
<div style="left:4.2px;top:153.1px;width:6.8px;height:1.9px;background:#3c3c3c;"></div>
<div style="left:6.6px;top:150.7px;width:1.9px;height:6.8px;background:#3c3c3c;"></div>
<div style="left:4.2px;top:210px;width:1.6px;height:386px;background:#bcbcbc;"></div>
<div style="left:2px;top:198.5px;width:11px;height:11px;background:#e6e6e6;box-shadow:0 0 0 0.5px #8a8a8a;"></div>
<div style="left:4.2px;top:203.1px;width:6.8px;height:1.9px;background:#3c3c3c;"></div>
<div style="left:17.3px;top:234px;width:1.6px;height:103px;background:#bcbcbc;"></div>
<div style="left:17.3px;top:336px;width:5px;height:1.6px;background:#bcbcbc;"></div>
<div style="left:15px;top:222.5px;width:11px;height:11px;background:#e6e6e6;box-shadow:0 0 0 0.5px #8a8a8a;"></div>
<div style="left:17.2px;top:227.1px;width:6.8px;height:1.9px;background:#3c3c3c;"></div>
<div style="left:17.3px;top:357px;width:1.6px;height:239px;background:#bcbcbc;"></div>
<div style="left:15px;top:345px;width:11px;height:11px;background:#e6e6e6;box-shadow:0 0 0 0.5px #8a8a8a;"></div>
<div style="left:17.2px;top:349.6px;width:6.8px;height:1.9px;background:#3c3c3c;"></div>
<div style="left:30px;top:246.5px;width:2px;height:2px;background:#9a9a9a;border-radius:1px;"></div>
<div style="left:30px;top:260.5px;width:2px;height:2px;background:#9a9a9a;border-radius:1px;"></div>
<div style="left:30px;top:274.5px;width:2px;height:2px;background:#9a9a9a;border-radius:1px;"></div>
<div style="left:30px;top:288.5px;width:2px;height:2px;background:#9a9a9a;border-radius:1px;"></div>
<div style="left:30px;top:302.5px;width:2px;height:2px;background:#9a9a9a;border-radius:1px;"></div>
<div style="left:30px;top:316.5px;width:2px;height:2px;background:#9a9a9a;border-radius:1px;"></div>
<div style="left:30px;top:330.5px;width:2px;height:2px;background:#9a9a9a;border-radius:1px;"></div>
<div style="left:30px;top:368.5px;width:2px;height:2px;background:#9a9a9a;border-radius:1px;"></div>
<div style="left:30px;top:382.5px;width:2px;height:2px;background:#9a9a9a;border-radius:1px;"></div>
<div style="left:30px;top:396.5px;width:2px;height:2px;background:#9a9a9a;border-radius:1px;"></div>
<div style="left:30px;top:410.5px;width:2px;height:2px;background:#9a9a9a;border-radius:1px;"></div>
<div style="left:30px;top:424.5px;width:2px;height:2px;background:#9a9a9a;border-radius:1px;"></div>
<div style="left:30px;top:438.5px;width:2px;height:2px;background:#9a9a9a;border-radius:1px;"></div>
<div style="left:30px;top:452.5px;width:2px;height:2px;background:#9a9a9a;border-radius:1px;"></div>
<div style="left:30px;top:466.5px;width:2px;height:2px;background:#9a9a9a;border-radius:1px;"></div>
<div style="left:30px;top:480.5px;width:2px;height:2px;background:#9a9a9a;border-radius:1px;"></div>
<div style="left:30px;top:494.5px;width:2px;height:2px;background:#9a9a9a;border-radius:1px;"></div>
<div style="left:30px;top:508.5px;width:2px;height:2px;background:#9a9a9a;border-radius:1px;"></div>
<div style="left:30px;top:522.5px;width:2px;height:2px;background:#9a9a9a;border-radius:1px;"></div>
<div style="left:30px;top:536.5px;width:2px;height:2px;background:#9a9a9a;border-radius:1px;"></div>
<div style="left:30px;top:550.5px;width:2px;height:2px;background:#9a9a9a;border-radius:1px;"></div>
<div style="left:30px;top:564.5px;width:2px;height:2px;background:#9a9a9a;border-radius:1px;"></div>
<div style="left:30px;top:578.5px;width:2px;height:2px;background:#9a9a9a;border-radius:1px;"></div>
<div style="left:30px;top:592.5px;width:2px;height:2px;background:#9a9a9a;border-radius:1px;"></div>
</div></body></html>
